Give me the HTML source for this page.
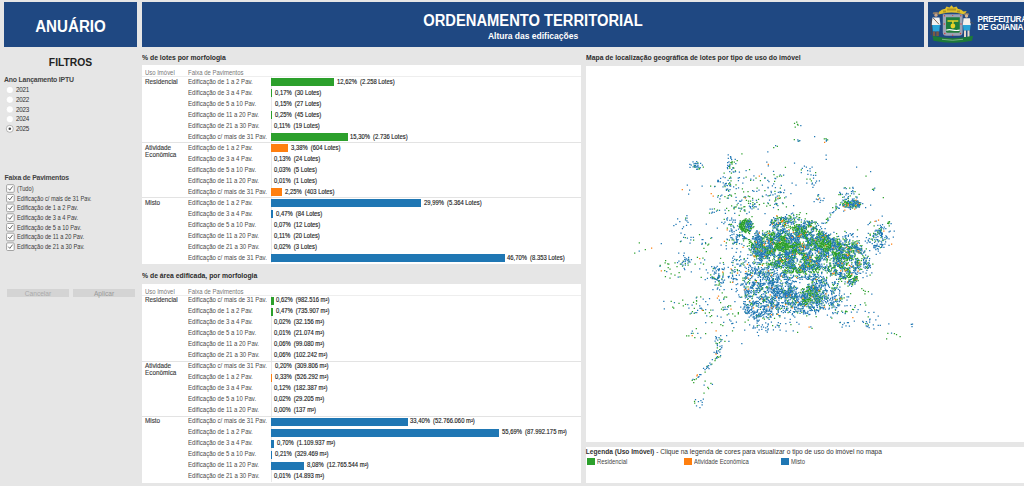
<!DOCTYPE html><html><head><meta charset="utf-8"><style>
*{margin:0;padding:0;box-sizing:border-box}
html,body{width:1024px;height:486px;overflow:hidden;background:#e6e6e6;font-family:"Liberation Sans",sans-serif;position:relative}
.a{position:absolute;white-space:nowrap}
.hdr{position:absolute;background:#1f4882;top:2px;height:45px}
.tbl{position:absolute;left:142px;width:439px;height:199px;background:#fff}
.th{position:absolute;font-size:6.4px;color:#777;white-space:nowrap;line-height:8px;transform:scaleX(0.93);transform-origin:0 0}
.hl{position:absolute;left:142px;width:439px;height:1px;background:#eee}
.gl{position:absolute;left:142px;width:439px;height:1px;background:#e3e3e3}
.vl{position:absolute;left:271px;width:1px;background:#e8e8e8}
.grp{position:absolute;font-size:6.6px;color:#3a3a3a;-webkit-text-stroke:0.12px #3a3a3a;line-height:7.2px;white-space:nowrap;transform:scaleX(0.96);transform-origin:0 0}
.lab{position:absolute;font-size:6.5px;color:#4a4a4a;white-space:nowrap;line-height:8px;transform:scaleX(0.93);transform-origin:0 0}
.val{position:absolute;font-size:6.9px;color:#222;-webkit-text-stroke:0.15px #222;white-space:pre;line-height:8px;transform:scaleX(0.85);transform-origin:0 0}
.bar{position:absolute;height:8px}
.ttl{position:absolute;font-size:7px;font-weight:bold;color:#2b2b2b;white-space:nowrap;transform:scaleX(0.975);transform-origin:0 0}
.rad{position:absolute;left:6.5px;width:7px;height:7px;border-radius:50%;background:#fff;border:0.5px solid #ddd}
.rt{position:absolute;left:16px;font-size:6.3px;color:#333;letter-spacing:-0.25px;white-space:nowrap;line-height:8px}
.cb{position:absolute;left:6.5px;width:8px;height:7.5px;background:#fff;border:1px solid #aaa}
.ct{position:absolute;left:17px;font-size:6.7px;color:#3a3a3a;white-space:nowrap;line-height:8px;transform:scaleX(0.853);transform-origin:0 0}
.btn{position:absolute;top:289px;height:8px;background:#d4d4d4;font-size:6.6px;text-align:center;line-height:9.4px}
</style></head><body>
<div class="hdr" style="left:4px;width:133px"></div>
<div class="hdr" style="left:142px;width:782px"></div>
<div class="hdr" style="left:928px;width:96px"></div>
<div class="a" style="left:4px;width:133px;top:17.5px;text-align:center;color:#fff;font-weight:bold;font-size:15.6px;line-height:18px;transform:scaleX(0.97)">ANUÁRIO</div>
<div class="a" style="left:142px;width:782px;top:11.5px;text-align:center;color:#fff;font-weight:bold;font-size:16px;line-height:17px;transform:scaleX(0.92)">ORDENAMENTO TERRITORIAL</div>
<div class="a" style="left:142px;width:782px;top:30.7px;text-align:center;color:#fff;font-weight:bold;font-size:8.5px;line-height:10px">Altura das edificações</div>
<div class="a" style="left:977.5px;top:15.8px;color:#fff;font-weight:bold;font-size:8.2px;letter-spacing:-0.3px;line-height:7.8px">PREFEITURA<br>DE GOIÂNIA</div>
<svg class="a" style="left:926px;top:2px" width="50" height="45" viewBox="0 0 50 45">
<path d="M13.5 9.5 Q16 6.5 19 7 L20.5 4.5 L23.5 5.5 L25.5 3.2 L27.5 5.5 L30.5 4.5 L32 7 Q35 6.5 37.5 9.5 L40.7 9 L38.5 12.5 L35 11.8 Q25.5 9 16 11.8 L12.5 12.5 L13.4 9 Z" fill="#e2c12a"/>
<path d="M21 6.5 h9 v2 h-9z M17 8.5 h3 v2 h-3z M31 8.5 h3 v2 h-3z" fill="#7a6a20" opacity="0.5"/>
<path d="M16.8 12.3 h19.8 v18 q0 3.5 -3.5 3.5 h-12.8 q-3.5 0 -3.5 -3.5 z" fill="#9ca3b4"/>
<path d="M20 15.3 h13.8 v14 q0 1.5 -1.5 1.5 h-10.8 q-1.5 0 -1.5 -1.5 z" fill="#1f7d3c"/>
<path d="M21.5 18.2 h10.8 v1.5 h-4.6 v2 h-1.6 v-2 h-4.6z" fill="#e6d22a"/>
<circle cx="26.9" cy="24" r="2.4" fill="#e6d22a"/>
<path d="M20.3 27.5 q3 -0.8 6.6 0 q3.5 0.8 6.8 0 v1.2 q-3.3 0.8 -6.8 0 q-3.6 -0.8 -6.6 0z" fill="#ffffff"/>
<circle cx="18.5" cy="13.8" r="0.7" fill="#d23a3a"/><circle cx="26.7" cy="13.5" r="0.6" fill="#d23a3a"/><circle cx="34.8" cy="13.8" r="0.7" fill="#d23a3a"/>
<circle cx="18.3" cy="22" r="0.7" fill="#d23a3a"/><circle cx="35" cy="22" r="0.7" fill="#d23a3a"/>
<circle cx="18.8" cy="31.5" r="0.7" fill="#d23a3a"/><circle cx="34.5" cy="31.5" r="0.7" fill="#d23a3a"/><circle cx="26.7" cy="33.2" r="0.6" fill="#d23a3a"/>
<ellipse cx="10" cy="11.3" rx="3.3" ry="1.4" fill="#8a7a6a"/>
<circle cx="10" cy="13.2" r="1.6" fill="#c9a58a"/>
<path d="M6.5 15.5 h7 l1 7.5 h-9 z" fill="#f2f2f2"/>
<path d="M7 15.8 l6 6.5" stroke="#6b4a30" stroke-width="0.8"/>
<path d="M6.3 23 h7.6 l-0.6 6.5 h-6.4z" fill="#2aa5d8"/>
<path d="M6.8 29.5 h2.5 v4.5 h-2.5z M10.3 29.5 h2.5 v4.5 h-2.5z" fill="#7a5a44"/>
<path d="M5.2 17 v16" stroke="#5a4030" stroke-width="0.8"/>
<ellipse cx="40.5" cy="12.3" rx="2.6" ry="1.3" fill="#8a7a6a"/>
<circle cx="40.5" cy="14" r="1.7" fill="#d6b394"/>
<path d="M37.5 16.3 h6.5 l0.8 7 h-8z" fill="#f4f0ec"/>
<path d="M37 23 h7.5 l-0.5 5.5 h-6.5z" fill="#2aa5d8"/>
<path d="M38 28.5 h2 v6.5 h-2z M41.5 28.5 h2 v6.5 h-2z" fill="#e8d8c8"/>
<path d="M44 20 l3.5 1.5" stroke="#555" stroke-width="0.9"/>
<path d="M6.5 33.8 Q26.7 38.5 47 33.8 L46 38.8 Q26.7 42.5 7.5 38.8 Z" fill="#1d7a38"/>
<path d="M16 37.3 Q26.7 39.2 37 37.3" stroke="#b8d8b8" stroke-width="0.6" fill="none"/>
</svg>

<div class="a" style="left:4px;width:133px;top:57px;text-align:center;color:#222;font-weight:bold;font-size:10.3px;line-height:12px">FILTROS</div>
<div class="a" style="left:4px;top:75.5px;color:#444;font-weight:bold;font-size:6.9px;letter-spacing:-0.2px;line-height:8px">Ano Lançamento IPTU</div>
<div class="a" style="left:4.5px;top:173.8px;color:#444;font-weight:bold;font-size:6.9px;letter-spacing:-0.2px;line-height:8px">Faixa de Pavimentos</div>
<div class="rt" style="top:86.1px">2021</div>
<div class="rt" style="top:95.8px">2022</div>
<div class="rt" style="top:105.5px">2023</div>
<div class="rt" style="top:115.2px">2024</div>
<div class="rt" style="top:124.9px">2025</div>
<div class="ct" style="top:184.8px">(Tudo)</div>
<div class="ct" style="top:194.5px">Edificação c/ mais de 31 Pav.</div>
<div class="ct" style="top:204.2px">Edificação de 1 a 2 Pav.</div>
<div class="ct" style="top:213.9px">Edificação de 3 a 4 Pav.</div>
<div class="ct" style="top:223.6px">Edificação de 5 a 10 Pav.</div>
<div class="ct" style="top:233.3px">Edificação de 11 a 20 Pav.</div>
<div class="ct" style="top:243.0px">Edificação de 21 a 30 Pav.</div>
<svg class="a" style="left:0;top:0" width="140" height="300" viewBox="0 0 140 300"><circle cx="9.8" cy="90.00" r="3.6" fill="#fff" stroke="#d6d6d6" stroke-width="0.5"/><circle cx="9.8" cy="99.70" r="3.6" fill="#fff" stroke="#d6d6d6" stroke-width="0.5"/><circle cx="9.8" cy="109.40" r="3.6" fill="#fff" stroke="#d6d6d6" stroke-width="0.5"/><circle cx="9.8" cy="119.10" r="3.6" fill="#fff" stroke="#d6d6d6" stroke-width="0.5"/><circle cx="9.8" cy="128.80" r="3.5" fill="#fff" stroke="#999" stroke-width="0.7"/><circle cx="9.8" cy="128.80" r="1.3" fill="#444"/><rect x="6.6" y="184.70" width="7.6" height="7.6" rx="1" fill="#fff" stroke="#9a9a9a" stroke-width="0.9"/><path d="M8.3 188.50 L9.8 190.20 L12.6 186.40" fill="none" stroke="#555" stroke-width="0.9"/><rect x="6.6" y="194.40" width="7.6" height="7.6" rx="1" fill="#fff" stroke="#9a9a9a" stroke-width="0.9"/><path d="M8.3 198.20 L9.8 199.90 L12.6 196.10" fill="none" stroke="#555" stroke-width="0.9"/><rect x="6.6" y="204.10" width="7.6" height="7.6" rx="1" fill="#fff" stroke="#9a9a9a" stroke-width="0.9"/><path d="M8.3 207.90 L9.8 209.60 L12.6 205.80" fill="none" stroke="#555" stroke-width="0.9"/><rect x="6.6" y="213.80" width="7.6" height="7.6" rx="1" fill="#fff" stroke="#9a9a9a" stroke-width="0.9"/><path d="M8.3 217.60 L9.8 219.30 L12.6 215.50" fill="none" stroke="#555" stroke-width="0.9"/><rect x="6.6" y="223.50" width="7.6" height="7.6" rx="1" fill="#fff" stroke="#9a9a9a" stroke-width="0.9"/><path d="M8.3 227.30 L9.8 229.00 L12.6 225.20" fill="none" stroke="#555" stroke-width="0.9"/><rect x="6.6" y="233.20" width="7.6" height="7.6" rx="1" fill="#fff" stroke="#9a9a9a" stroke-width="0.9"/><path d="M8.3 237.00 L9.8 238.70 L12.6 234.90" fill="none" stroke="#555" stroke-width="0.9"/><rect x="6.6" y="242.90" width="7.6" height="7.6" rx="1" fill="#fff" stroke="#9a9a9a" stroke-width="0.9"/><path d="M8.3 246.70 L9.8 248.40 L12.6 244.60" fill="none" stroke="#555" stroke-width="0.9"/></svg>
<div class="btn" style="left:7px;width:62px;color:#aaa">Cancelar</div>
<div class="btn" style="left:73px;width:62px;color:#999">Aplicar</div>
<div class="ttl" style="left:142px;top:54px">% de lotes por morfologia</div>
<div class="tbl" style="top:65px"></div>
<div class="th" style="left:145px;top:69px">Uso Imóvel</div>
<div class="th" style="left:188px;top:69px">Faixa de Pavimentos</div>
<div class="hl" style="top:76px"></div>
<div class="vl" style="top:76px;height:187px"></div>
<div class="grp" style="left:145px;top:77.5px">Residencial</div>
<div class="lab" style="left:188px;top:77.5px">Edificação de 1 a 2 Pav.</div>
<div class="bar" style="left:271px;top:78px;width:63.10px;background:#2ca02c"></div>
<div class="val" style="left:336.90px;top:77.5px">12,62%  (2.258 Lotes)</div>
<div class="lab" style="left:188px;top:88.5px">Edificação de 3 a 4 Pav.</div>
<div class="bar" style="left:271px;top:89px;width:0.85px;background:#2ca02c"></div>
<div class="val" style="left:274.65px;top:88.5px">0,17%  (30 Lotes)</div>
<div class="lab" style="left:188px;top:99.5px">Edificação de 5 a 10 Pav.</div>
<div class="val" style="left:274.55px;top:99.5px">0,15%  (27 Lotes)</div>
<div class="lab" style="left:188px;top:110.5px">Edificação de 11 a 20 Pav.</div>
<div class="bar" style="left:271px;top:111px;width:1.25px;background:#2ca02c"></div>
<div class="val" style="left:275.05px;top:110.5px">0,25%  (45 Lotes)</div>
<div class="lab" style="left:188px;top:121.5px">Edificação de 21 a 30 Pav.</div>
<div class="val" style="left:274.35px;top:121.5px">0,11%  (19 Lotes)</div>
<div class="lab" style="left:188px;top:132.5px">Edificação c/ mais de 31 Pav.</div>
<div class="bar" style="left:271px;top:133px;width:76.50px;background:#2ca02c"></div>
<div class="val" style="left:350.30px;top:132.5px">15,30%  (2.736 Lotes)</div>
<div class="gl" style="top:142px"></div>
<div class="grp" style="left:145px;top:143.5px">Atividade<br>Econômica</div>
<div class="lab" style="left:188px;top:143.5px">Edificação de 1 a 2 Pav.</div>
<div class="bar" style="left:271px;top:144px;width:16.90px;background:#ff7f0e"></div>
<div class="val" style="left:290.70px;top:143.5px">3,38%  (604 Lotes)</div>
<div class="lab" style="left:188px;top:154.5px">Edificação de 3 a 4 Pav.</div>
<div class="val" style="left:274.45px;top:154.5px">0,13%  (24 Lotes)</div>
<div class="lab" style="left:188px;top:165.5px">Edificação de 5 a 10 Pav.</div>
<div class="val" style="left:273.95px;top:165.5px">0,03%  (5 Lotes)</div>
<div class="lab" style="left:188px;top:176.5px">Edificação de 11 a 20 Pav.</div>
<div class="val" style="left:273.85px;top:176.5px">0,01%  (1 Lotes)</div>
<div class="lab" style="left:188px;top:187.5px">Edificação c/ mais de 31 Pav.</div>
<div class="bar" style="left:271px;top:188px;width:11.25px;background:#ff7f0e"></div>
<div class="val" style="left:285.05px;top:187.5px">2,25%  (403 Lotes)</div>
<div class="gl" style="top:197px"></div>
<div class="grp" style="left:145px;top:198.5px">Misto</div>
<div class="lab" style="left:188px;top:198.5px">Edificação de 1 a 2 Pav.</div>
<div class="bar" style="left:271px;top:199px;width:149.95px;background:#1f77b4"></div>
<div class="val" style="left:423.75px;top:198.5px">29,99%  (5.364 Lotes)</div>
<div class="lab" style="left:188px;top:209.5px">Edificação de 3 a 4 Pav.</div>
<div class="bar" style="left:271px;top:210px;width:2.35px;background:#1f77b4"></div>
<div class="val" style="left:276.15px;top:209.5px">0,47%  (84 Lotes)</div>
<div class="lab" style="left:188px;top:220.5px">Edificação de 5 a 10 Pav.</div>
<div class="val" style="left:274.15px;top:220.5px">0,07%  (12 Lotes)</div>
<div class="lab" style="left:188px;top:231.5px">Edificação de 11 a 20 Pav.</div>
<div class="val" style="left:274.35px;top:231.5px">0,11%  (20 Lotes)</div>
<div class="lab" style="left:188px;top:242.5px">Edificação de 21 a 30 Pav.</div>
<div class="val" style="left:273.90px;top:242.5px">0,02%  (3 Lotes)</div>
<div class="lab" style="left:188px;top:253.5px">Edificação c/ mais de 31 Pav.</div>
<div class="bar" style="left:271px;top:254px;width:233.50px;background:#1f77b4"></div>
<div class="val" style="left:507.30px;top:253.5px">46,70%  (8.353 Lotes)</div>
<div class="ttl" style="left:142px;top:271.5px">% de área edificada, por morfologia</div>
<div class="tbl" style="top:283.5px"></div>
<div class="th" style="left:145px;top:287.5px">Uso Imóvel</div>
<div class="th" style="left:188px;top:287.5px">Faixa de Pavimentos</div>
<div class="hl" style="top:294.5px"></div>
<div class="vl" style="top:294.5px;height:187px"></div>
<div class="grp" style="left:145px;top:296.0px">Residencial</div>
<div class="lab" style="left:188px;top:296.0px">Edificação c/ mais de 31 Pav.</div>
<div class="bar" style="left:271px;top:296.5px;width:2.54px;background:#2ca02c"></div>
<div class="val" style="left:276.34px;top:296.0px">0,62%  (982.516 m²)</div>
<div class="lab" style="left:188px;top:307.0px">Edificação de 1 a 2 Pav.</div>
<div class="bar" style="left:271px;top:307.5px;width:1.92px;background:#2ca02c"></div>
<div class="val" style="left:275.72px;top:307.0px">0,47%  (735.907 m²)</div>
<div class="lab" style="left:188px;top:318.0px">Edificação de 3 a 4 Pav.</div>
<div class="val" style="left:273.88px;top:318.0px">0,02%  (32.156 m²)</div>
<div class="lab" style="left:188px;top:329.0px">Edificação de 5 a 10 Pav.</div>
<div class="val" style="left:273.84px;top:329.0px">0,01%  (21.074 m²)</div>
<div class="lab" style="left:188px;top:340.0px">Edificação de 11 a 20 Pav.</div>
<div class="val" style="left:274.05px;top:340.0px">0,06%  (99.080 m²)</div>
<div class="lab" style="left:188px;top:351.0px">Edificação de 21 a 30 Pav.</div>
<div class="val" style="left:274.05px;top:351.0px">0,06%  (102.242 m²)</div>
<div class="gl" style="top:360.5px"></div>
<div class="grp" style="left:145px;top:362.0px">Atividade<br>Econômica</div>
<div class="lab" style="left:188px;top:362.0px">Edificação c/ mais de 31 Pav.</div>
<div class="val" style="left:274.62px;top:362.0px">0,20%  (309.806 m²)</div>
<div class="lab" style="left:188px;top:373.0px">Edificação de 1 a 2 Pav.</div>
<div class="bar" style="left:271px;top:373.5px;width:1.35px;background:#ff7f0e"></div>
<div class="val" style="left:275.15px;top:373.0px">0,33%  (526.292 m²)</div>
<div class="lab" style="left:188px;top:384.0px">Edificação de 3 a 4 Pav.</div>
<div class="val" style="left:274.29px;top:384.0px">0,12%  (182.387 m²)</div>
<div class="lab" style="left:188px;top:395.0px">Edificação de 5 a 10 Pav.</div>
<div class="val" style="left:273.88px;top:395.0px">0,02%  (29.205 m²)</div>
<div class="lab" style="left:188px;top:406.0px">Edificação de 11 a 20 Pav.</div>
<div class="val" style="left:273.80px;top:406.0px">0,00%  (137 m²)</div>
<div class="gl" style="top:415.5px"></div>
<div class="grp" style="left:145px;top:417.0px">Misto</div>
<div class="lab" style="left:188px;top:417.0px">Edificação c/ mais de 31 Pav.</div>
<div class="bar" style="left:271px;top:417.5px;width:136.61px;background:#1f77b4"></div>
<div class="val" style="left:410.41px;top:417.0px">33,40%  (52.766.060 m²)</div>
<div class="lab" style="left:188px;top:428.0px">Edificação de 1 a 2 Pav.</div>
<div class="bar" style="left:271px;top:428.5px;width:227.77px;background:#1f77b4"></div>
<div class="val" style="left:501.57px;top:428.0px">55,69%  (87.992.175 m²)</div>
<div class="lab" style="left:188px;top:439.0px">Edificação de 3 a 4 Pav.</div>
<div class="bar" style="left:271px;top:439.5px;width:2.86px;background:#1f77b4"></div>
<div class="val" style="left:276.66px;top:439.0px">0,70%  (1.109.937 m²)</div>
<div class="lab" style="left:188px;top:450.0px">Edificação de 5 a 10 Pav.</div>
<div class="bar" style="left:271px;top:450.5px;width:0.86px;background:#1f77b4"></div>
<div class="val" style="left:274.66px;top:450.0px">0,21%  (329.469 m²)</div>
<div class="lab" style="left:188px;top:461.0px">Edificação de 11 a 20 Pav.</div>
<div class="bar" style="left:271px;top:461.5px;width:33.05px;background:#1f77b4"></div>
<div class="val" style="left:306.85px;top:461.0px">8,08%  (12.765.544 m²)</div>
<div class="lab" style="left:188px;top:472.0px">Edificação de 21 a 30 Pav.</div>
<div class="val" style="left:273.84px;top:472.0px">0,01%  (14.893 m²)</div>
<div class="ttl" style="left:586px;top:54px">Mapa de localização geográfica de lotes por tipo de uso do imóvel</div>
<div class="a" style="left:586px;top:66px;width:438px;height:376px;background:#fff"></div>
<svg class="a" style="left:586px;top:65px" width="438" height="377" viewBox="0 0 438 377"><path stroke="#2ca02c" stroke-width="1.25" d="M210.1 57.2h1.25M207.9 58.3h1.25M210.9 59.4h1.25M211.4 60.2h1.25M208.6 62.0h1.25M237.7 73.8h1.25M239.4 73.7h1.25M207.7 74.6h1.25M241.0 74.8h1.25M212.5 75.8h1.25M190.7 81.3h1.25M187.1 82.7h1.25M155.3 88.8h1.25M150.6 95.5h1.25M145.5 96.5h1.25M147.7 97.1h1.25M111.2 97.8h1.25M144.2 97.7h1.25M145.4 97.6h1.25M145.4 99.1h1.25M107.7 100.5h1.25M143.0 101.5h1.25M107.9 102.1h1.25M116.7 102.2h1.25M146.5 102.7h1.25M198.8 102.3h1.25M112.6 103.4h1.25M112.9 103.7h1.25M143.2 103.0h1.25M147.2 103.1h1.25M112.4 104.2h1.25M162.9 104.7h1.25M214.7 104.8h1.25M148.8 105.8h1.25M137.5 108.0h1.25M144.8 108.0h1.25M229.0 107.5h1.25M187.4 109.7h1.25M192.9 111.1h1.25M194.9 111.2h1.25M143.9 112.2h1.25M159.5 112.1h1.25M178.3 112.5h1.25M190.5 111.8h1.25M142.9 113.4h1.25M169.4 113.0h1.25M220.3 114.1h1.25M223.5 114.2h1.25M144.4 115.9h1.25M164.0 115.3h1.25M173.8 115.6h1.25M224.8 115.8h1.25M188.0 116.4h1.25M142.0 118.9h1.25M143.4 118.9h1.25M143.9 119.8h1.25M149.4 119.8h1.25M128.3 121.3h1.25M138.4 121.7h1.25M258.5 122.5h1.25M170.5 123.0h1.25M193.7 123.2h1.25M263.1 123.0h1.25M155.8 123.9h1.25M285.9 124.4h1.25M287.1 124.0h1.25M141.8 125.4h1.25M178.3 125.6h1.25M157.0 126.8h1.25M161.4 126.6h1.25M188.3 126.3h1.25M268.4 126.7h1.25M148.5 128.7h1.25M144.3 130.1h1.25M252.3 129.7h1.25M253.9 129.7h1.25M272.5 129.4h1.25M131.7 130.6h1.25M141.7 130.6h1.25M144.9 131.1h1.25M161.7 131.2h1.25M182.6 130.7h1.25M192.5 130.9h1.25M231.4 131.0h1.25M263.6 130.9h1.25M138.3 131.7h1.25M157.4 132.4h1.25M163.1 131.7h1.25M176.2 131.7h1.25M256.2 132.3h1.25M269.3 131.8h1.25M140.7 133.2h1.25M166.0 133.3h1.25M192.9 133.3h1.25M193.7 132.9h1.25M198.0 132.9h1.25M261.7 133.4h1.25M171.9 134.3h1.25M189.0 133.9h1.25M159.8 135.3h1.25M189.3 135.1h1.25M257.1 135.6h1.25M261.8 135.3h1.25M267.1 135.6h1.25M268.5 135.6h1.25M161.9 136.0h1.25M163.9 136.1h1.25M188.2 136.1h1.25M258.6 136.0h1.25M259.3 136.8h1.25M133.1 137.4h1.25M166.3 137.5h1.25M170.3 137.4h1.25M254.2 137.8h1.25M257.8 137.1h1.25M258.3 137.4h1.25M259.9 137.8h1.25M260.6 137.6h1.25M261.4 137.8h1.25M264.0 137.3h1.25M265.4 137.8h1.25M269.3 137.6h1.25M270.9 137.1h1.25M273.1 137.7h1.25M161.9 138.4h1.25M177.2 138.4h1.25M181.8 138.7h1.25M196.5 138.7h1.25M249.5 138.8h1.25M256.1 138.8h1.25M257.2 138.6h1.25M259.6 138.8h1.25M261.0 138.6h1.25M261.8 138.7h1.25M265.1 139.0h1.25M268.6 138.8h1.25M150.5 139.9h1.25M166.3 139.5h1.25M172.8 139.7h1.25M190.0 139.5h1.25M256.1 140.1h1.25M260.4 139.6h1.25M268.5 139.3h1.25M272.6 139.6h1.25M273.9 139.4h1.25M145.0 140.8h1.25M180.1 141.0h1.25M183.5 140.4h1.25M258.2 141.1h1.25M259.8 140.8h1.25M260.6 140.6h1.25M263.7 141.0h1.25M265.3 140.9h1.25M268.2 140.6h1.25M148.3 142.0h1.25M149.5 141.8h1.25M157.2 141.8h1.25M158.2 141.6h1.25M199.8 141.8h1.25M249.4 141.8h1.25M259.4 142.0h1.25M263.9 141.8h1.25M266.5 141.5h1.25M268.8 141.6h1.25M269.3 142.0h1.25M270.2 141.9h1.25M140.0 143.4h1.25M147.3 143.3h1.25M153.3 143.3h1.25M155.2 143.0h1.25M167.2 142.8h1.25M246.1 142.7h1.25M249.4 143.2h1.25M266.0 143.2h1.25M127.8 143.8h1.25M147.5 143.9h1.25M191.7 144.5h1.25M249.9 143.8h1.25M130.9 145.2h1.25M142.1 145.6h1.25M158.1 144.9h1.25M153.8 146.1h1.25M158.3 146.1h1.25M213.5 147.5h1.25M122.9 148.1h1.25M219.9 148.7h1.25M206.9 149.8h1.25M210.2 149.5h1.25M212.6 149.5h1.25M244.1 149.8h1.25M152.6 150.4h1.25M202.4 150.6h1.25M203.5 151.1h1.25M165.4 151.6h1.25M190.5 151.5h1.25M194.8 152.2h1.25M204.3 151.9h1.25M210.2 151.6h1.25M99.0 153.0h1.25M191.4 153.0h1.25M192.8 152.6h1.25M194.0 153.1h1.25M201.1 153.1h1.25M203.5 153.2h1.25M204.4 153.0h1.25M206.8 153.1h1.25M212.5 152.6h1.25M213.1 152.5h1.25M241.2 153.2h1.25M137.6 154.3h1.25M158.7 154.2h1.25M159.6 153.9h1.25M162.7 153.9h1.25M190.3 153.7h1.25M194.0 154.1h1.25M197.1 153.9h1.25M199.0 154.3h1.25M202.3 154.2h1.25M211.2 154.3h1.25M218.6 153.9h1.25M239.8 154.4h1.25M241.1 154.1h1.25M156.5 155.5h1.25M157.4 155.1h1.25M158.4 155.0h1.25M159.6 155.5h1.25M161.0 155.0h1.25M163.6 155.1h1.25M185.7 155.0h1.25M189.1 155.3h1.25M193.8 155.3h1.25M196.8 155.1h1.25M197.7 155.3h1.25M204.4 155.3h1.25M207.8 154.7h1.25M225.2 155.5h1.25M153.6 155.9h1.25M155.5 156.3h1.25M155.8 156.1h1.25M157.1 155.9h1.25M158.3 156.2h1.25M159.8 156.6h1.25M160.6 156.5h1.25M161.5 156.4h1.25M162.7 156.1h1.25M164.6 156.5h1.25M187.9 155.9h1.25M189.1 156.2h1.25M199.2 156.6h1.25M200.3 156.1h1.25M201.4 156.3h1.25M204.2 155.9h1.25M208.2 156.1h1.25M222.9 156.4h1.25M302.9 156.5h1.25M155.1 157.6h1.25M156.1 157.3h1.25M157.0 157.6h1.25M158.0 157.2h1.25M159.6 157.6h1.25M161.4 157.5h1.25M162.9 157.1h1.25M184.8 157.7h1.25M186.1 157.1h1.25M187.2 157.4h1.25M193.6 157.3h1.25M194.9 157.0h1.25M197.2 156.9h1.25M198.1 157.3h1.25M214.7 157.1h1.25M218.7 157.1h1.25M221.1 157.1h1.25M227.9 157.1h1.25M229.7 157.3h1.25M240.0 157.7h1.25M283.9 157.2h1.25M301.8 157.0h1.25M302.6 157.0h1.25M153.6 158.5h1.25M154.7 158.5h1.25M156.3 158.7h1.25M157.3 158.1h1.25M158.1 158.4h1.25M160.5 158.4h1.25M166.4 158.7h1.25M198.4 158.7h1.25M207.6 158.1h1.25M221.9 158.2h1.25M224.6 158.4h1.25M225.7 158.2h1.25M228.7 158.8h1.25M301.0 158.4h1.25M302.2 158.7h1.25M143.0 159.4h1.25M143.9 159.9h1.25M144.9 159.4h1.25M152.7 159.2h1.25M154.0 159.5h1.25M155.3 159.5h1.25M155.9 159.3h1.25M157.1 159.7h1.25M158.4 159.2h1.25M162.0 159.5h1.25M163.2 159.9h1.25M164.1 159.4h1.25M165.9 159.1h1.25M187.9 159.1h1.25M192.5 159.5h1.25M196.1 159.8h1.25M198.0 159.9h1.25M198.8 159.7h1.25M210.0 159.5h1.25M211.5 159.5h1.25M213.0 159.5h1.25M221.2 159.9h1.25M224.2 159.8h1.25M153.2 160.4h1.25M154.3 160.2h1.25M155.0 160.8h1.25M156.5 160.9h1.25M157.0 160.7h1.25M158.8 160.9h1.25M161.0 160.7h1.25M165.0 160.5h1.25M190.4 161.0h1.25M191.7 160.9h1.25M197.1 160.5h1.25M201.5 160.4h1.25M208.0 160.4h1.25M209.8 160.2h1.25M212.2 160.5h1.25M213.4 161.0h1.25M221.5 160.6h1.25M222.4 160.2h1.25M223.3 160.4h1.25M224.6 160.5h1.25M287.5 160.9h1.25M302.6 160.8h1.25M147.0 161.9h1.25M152.5 161.7h1.25M153.7 161.6h1.25M154.8 162.1h1.25M156.2 161.8h1.25M157.7 161.4h1.25M158.2 162.0h1.25M167.2 161.6h1.25M197.8 161.8h1.25M202.3 162.1h1.25M203.8 161.3h1.25M206.0 162.0h1.25M208.0 161.9h1.25M209.2 161.8h1.25M210.3 161.7h1.25M216.9 161.6h1.25M219.9 161.9h1.25M222.0 161.9h1.25M223.6 161.6h1.25M226.5 161.8h1.25M229.7 161.4h1.25M140.7 163.1h1.25M153.1 162.9h1.25M154.4 162.6h1.25M155.2 162.5h1.25M156.1 162.8h1.25M157.6 163.1h1.25M158.1 162.7h1.25M160.4 162.7h1.25M164.0 162.5h1.25M164.9 163.2h1.25M166.4 162.5h1.25M186.6 163.0h1.25M189.1 162.8h1.25M200.2 162.7h1.25M204.4 162.6h1.25M206.4 162.6h1.25M207.7 162.5h1.25M209.0 162.8h1.25M210.4 163.0h1.25M211.3 163.0h1.25M212.2 162.7h1.25M214.7 163.1h1.25M215.2 162.6h1.25M216.9 162.9h1.25M220.0 162.7h1.25M226.9 162.5h1.25M228.1 162.8h1.25M154.0 164.2h1.25M154.9 163.9h1.25M156.1 164.0h1.25M156.9 163.7h1.25M158.2 163.6h1.25M159.4 164.3h1.25M160.3 164.0h1.25M163.6 163.7h1.25M164.7 163.9h1.25M191.1 164.0h1.25M203.9 163.7h1.25M206.0 164.0h1.25M207.6 163.7h1.25M210.2 164.0h1.25M211.4 163.9h1.25M212.3 163.8h1.25M214.4 163.8h1.25M215.7 164.2h1.25M217.9 163.7h1.25M219.6 163.7h1.25M225.7 164.1h1.25M226.9 163.6h1.25M228.7 163.6h1.25M292.7 163.6h1.25M294.8 163.8h1.25M155.0 165.2h1.25M156.4 165.3h1.25M157.1 164.8h1.25M158.6 165.2h1.25M159.2 164.9h1.25M160.8 164.7h1.25M161.9 165.3h1.25M191.1 165.2h1.25M193.7 164.8h1.25M206.4 164.9h1.25M208.3 165.1h1.25M209.2 164.8h1.25M211.1 164.9h1.25M212.2 165.2h1.25M214.9 164.8h1.25M215.3 164.6h1.25M216.4 165.2h1.25M217.9 165.4h1.25M219.7 164.6h1.25M226.9 164.9h1.25M230.0 164.6h1.25M230.6 164.7h1.25M270.9 164.9h1.25M294.4 165.0h1.25M156.0 166.1h1.25M157.5 166.0h1.25M158.4 166.0h1.25M159.4 166.5h1.25M160.5 165.8h1.25M161.4 165.8h1.25M162.9 166.3h1.25M163.7 166.0h1.25M176.0 165.8h1.25M180.7 166.3h1.25M182.7 165.9h1.25M196.7 166.2h1.25M206.7 165.8h1.25M209.2 166.0h1.25M210.3 166.3h1.25M210.9 165.8h1.25M213.3 166.0h1.25M214.9 166.2h1.25M215.8 166.2h1.25M218.2 166.0h1.25M218.8 166.0h1.25M221.2 166.0h1.25M229.7 166.0h1.25M232.3 166.4h1.25M233.1 165.8h1.25M235.5 166.4h1.25M258.3 166.3h1.25M291.3 166.3h1.25M294.6 165.8h1.25M153.2 167.3h1.25M158.1 166.9h1.25M159.2 167.6h1.25M162.0 167.6h1.25M182.9 166.9h1.25M186.8 167.2h1.25M192.1 167.2h1.25M193.9 166.9h1.25M196.8 167.2h1.25M199.9 166.9h1.25M209.4 167.5h1.25M212.6 167.0h1.25M214.8 167.2h1.25M215.5 167.0h1.25M216.9 167.4h1.25M217.8 167.2h1.25M218.9 167.3h1.25M219.9 167.3h1.25M220.7 167.1h1.25M223.7 167.5h1.25M224.3 167.1h1.25M232.0 166.9h1.25M232.8 167.4h1.25M234.5 167.4h1.25M291.2 167.6h1.25M162.9 168.6h1.25M169.2 168.0h1.25M178.1 168.1h1.25M181.3 168.1h1.25M185.1 168.2h1.25M185.9 167.9h1.25M187.2 168.3h1.25M188.0 168.5h1.25M195.0 168.6h1.25M199.0 168.7h1.25M201.3 168.5h1.25M202.7 167.9h1.25M209.0 167.9h1.25M211.5 168.0h1.25M212.1 168.4h1.25M213.3 168.2h1.25M215.9 168.6h1.25M216.5 168.1h1.25M217.9 168.4h1.25M222.5 167.9h1.25M231.4 168.5h1.25M232.3 168.5h1.25M234.2 168.4h1.25M235.8 168.1h1.25M250.0 168.6h1.25M287.0 168.4h1.25M292.7 168.3h1.25M112.9 169.7h1.25M179.3 169.7h1.25M180.0 169.3h1.25M183.0 169.3h1.25M183.9 169.1h1.25M184.7 169.1h1.25M185.8 169.6h1.25M187.4 169.2h1.25M187.9 169.0h1.25M191.1 169.3h1.25M207.7 169.2h1.25M212.0 169.5h1.25M213.1 169.8h1.25M217.0 169.4h1.25M217.4 169.6h1.25M218.9 169.7h1.25M222.1 169.4h1.25M224.6 169.3h1.25M230.3 169.5h1.25M232.2 169.8h1.25M233.0 169.2h1.25M233.9 169.4h1.25M235.3 169.8h1.25M236.8 169.4h1.25M238.3 169.6h1.25M283.5 169.2h1.25M288.5 169.3h1.25M290.5 169.5h1.25M152.7 170.5h1.25M154.2 170.4h1.25M171.4 170.1h1.25M176.0 170.2h1.25M176.8 170.2h1.25M179.0 170.3h1.25M182.7 170.7h1.25M185.0 170.3h1.25M185.5 170.7h1.25M187.4 170.3h1.25M189.5 170.8h1.25M191.8 170.5h1.25M194.9 170.8h1.25M198.0 170.1h1.25M199.2 170.4h1.25M201.3 170.2h1.25M202.1 170.4h1.25M209.1 170.1h1.25M211.3 170.3h1.25M215.3 170.1h1.25M218.0 170.3h1.25M218.7 170.7h1.25M224.2 170.6h1.25M231.8 170.7h1.25M243.1 170.3h1.25M283.6 170.3h1.25M166.2 171.5h1.25M174.8 172.0h1.25M177.9 171.6h1.25M179.0 171.9h1.25M180.6 171.3h1.25M187.0 171.7h1.25M187.8 171.5h1.25M193.9 171.2h1.25M194.7 171.4h1.25M195.6 171.6h1.25M197.0 171.4h1.25M198.0 171.8h1.25M198.9 172.0h1.25M209.4 171.8h1.25M210.5 171.2h1.25M214.1 171.5h1.25M217.6 171.5h1.25M218.6 171.9h1.25M225.3 171.7h1.25M233.2 171.3h1.25M235.5 171.3h1.25M236.2 171.6h1.25M237.4 171.8h1.25M239.9 171.6h1.25M241.8 171.8h1.25M250.5 171.6h1.25M98.7 172.5h1.25M159.4 173.0h1.25M174.8 172.6h1.25M177.3 172.9h1.25M179.7 172.7h1.25M181.4 172.7h1.25M183.6 172.3h1.25M184.8 173.1h1.25M186.2 173.1h1.25M190.0 172.7h1.25M192.3 172.8h1.25M193.4 172.3h1.25M194.8 172.9h1.25M196.1 172.9h1.25M197.2 172.4h1.25M198.0 172.8h1.25M213.3 172.6h1.25M215.5 172.9h1.25M218.8 172.8h1.25M219.9 172.6h1.25M220.7 172.9h1.25M229.2 172.7h1.25M232.5 172.4h1.25M234.4 172.4h1.25M235.1 172.5h1.25M237.6 172.9h1.25M238.4 172.9h1.25M239.5 172.7h1.25M243.0 173.0h1.25M247.4 172.7h1.25M287.2 172.7h1.25M294.4 172.5h1.25M124.2 173.4h1.25M157.2 173.9h1.25M158.4 173.7h1.25M175.9 173.5h1.25M177.3 173.8h1.25M181.2 174.2h1.25M182.6 173.8h1.25M183.5 173.5h1.25M184.4 173.9h1.25M185.7 174.2h1.25M187.0 174.1h1.25M191.6 173.9h1.25M193.7 173.9h1.25M194.6 174.0h1.25M195.4 173.7h1.25M197.0 173.6h1.25M198.3 174.1h1.25M202.6 173.6h1.25M209.1 174.2h1.25M219.1 173.5h1.25M220.0 173.6h1.25M221.0 174.0h1.25M224.1 173.6h1.25M225.3 174.1h1.25M226.2 173.8h1.25M229.9 173.6h1.25M230.7 173.8h1.25M232.2 173.9h1.25M236.9 174.0h1.25M237.4 173.9h1.25M238.4 173.5h1.25M240.9 173.7h1.25M247.4 173.9h1.25M251.2 174.1h1.25M252.7 174.0h1.25M256.5 173.9h1.25M259.3 173.5h1.25M284.5 174.0h1.25M107.0 175.0h1.25M142.8 175.1h1.25M145.5 174.9h1.25M147.2 175.0h1.25M161.8 174.6h1.25M162.9 174.7h1.25M175.6 174.8h1.25M180.2 174.6h1.25M183.7 175.1h1.25M185.0 175.1h1.25M186.1 174.8h1.25M194.5 174.7h1.25M195.6 175.1h1.25M196.5 174.7h1.25M197.9 175.0h1.25M199.9 175.0h1.25M206.1 174.6h1.25M221.3 175.3h1.25M223.5 174.7h1.25M225.4 174.6h1.25M226.7 175.2h1.25M227.7 175.3h1.25M231.7 174.6h1.25M233.6 174.6h1.25M235.5 174.5h1.25M236.6 175.1h1.25M237.3 174.8h1.25M238.6 174.6h1.25M239.9 175.3h1.25M241.2 174.6h1.25M241.9 175.2h1.25M243.9 174.9h1.25M249.4 175.0h1.25M250.8 174.6h1.25M257.7 174.8h1.25M259.4 175.1h1.25M285.9 175.1h1.25M298.4 174.6h1.25M156.9 175.9h1.25M164.2 175.8h1.25M168.0 176.3h1.25M169.4 175.8h1.25M173.9 175.8h1.25M176.4 176.3h1.25M177.5 176.1h1.25M184.0 176.3h1.25M185.1 175.7h1.25M185.8 175.6h1.25M189.2 175.6h1.25M190.5 175.8h1.25M191.3 176.1h1.25M193.5 176.4h1.25M194.9 175.7h1.25M195.8 175.7h1.25M197.2 175.7h1.25M198.4 175.9h1.25M199.3 176.1h1.25M201.7 175.7h1.25M202.6 175.8h1.25M211.5 175.8h1.25M220.8 175.9h1.25M221.9 176.3h1.25M225.4 175.7h1.25M226.8 176.1h1.25M229.8 175.9h1.25M230.8 176.2h1.25M232.1 176.2h1.25M233.4 175.9h1.25M234.0 175.9h1.25M235.5 176.0h1.25M236.5 176.3h1.25M237.4 176.1h1.25M240.1 176.2h1.25M241.2 176.3h1.25M243.2 176.1h1.25M243.9 175.9h1.25M246.7 175.6h1.25M248.6 176.2h1.25M250.7 176.2h1.25M266.3 175.9h1.25M270.4 175.8h1.25M272.5 175.7h1.25M288.9 176.0h1.25M292.6 175.8h1.25M296.2 175.7h1.25M93.8 176.7h1.25M162.9 176.7h1.25M164.2 177.3h1.25M168.6 177.3h1.25M175.0 177.4h1.25M185.0 177.4h1.25M186.2 177.3h1.25M187.8 177.4h1.25M189.5 177.5h1.25M191.4 177.0h1.25M194.9 177.5h1.25M195.9 177.0h1.25M197.2 177.1h1.25M197.6 176.8h1.25M199.4 176.7h1.25M203.2 177.1h1.25M208.0 176.9h1.25M208.8 177.5h1.25M211.1 177.3h1.25M213.5 177.2h1.25M216.8 177.0h1.25M221.3 176.9h1.25M222.0 177.5h1.25M224.7 177.1h1.25M225.4 176.8h1.25M227.7 176.8h1.25M228.9 177.1h1.25M229.9 177.0h1.25M232.2 176.7h1.25M233.0 177.2h1.25M234.5 177.5h1.25M235.5 177.1h1.25M236.7 176.9h1.25M238.7 177.5h1.25M239.8 177.0h1.25M242.0 177.0h1.25M243.1 176.9h1.25M244.0 176.8h1.25M246.5 177.1h1.25M249.7 177.2h1.25M251.1 177.4h1.25M252.2 177.2h1.25M259.9 177.1h1.25M262.0 177.2h1.25M268.4 176.9h1.25M269.2 176.9h1.25M52.7 177.9h1.25M119.0 178.5h1.25M139.8 177.9h1.25M146.3 178.3h1.25M162.6 178.3h1.25M164.9 177.9h1.25M166.1 178.3h1.25M169.1 178.2h1.25M173.7 177.8h1.25M179.1 178.6h1.25M183.7 178.3h1.25M188.0 178.6h1.25M189.5 177.9h1.25M190.5 178.5h1.25M191.7 178.4h1.25M192.7 178.2h1.25M193.9 178.5h1.25M194.5 178.4h1.25M195.8 178.0h1.25M196.8 178.2h1.25M198.2 178.3h1.25M198.9 178.0h1.25M200.1 178.2h1.25M201.7 178.0h1.25M202.4 177.8h1.25M206.7 178.6h1.25M207.5 177.9h1.25M209.2 178.4h1.25M210.4 177.9h1.25M212.1 178.5h1.25M213.6 178.3h1.25M221.0 178.0h1.25M222.4 178.3h1.25M223.5 178.5h1.25M225.5 178.2h1.25M226.7 178.5h1.25M229.0 178.2h1.25M229.7 178.6h1.25M230.7 178.2h1.25M233.2 178.5h1.25M234.6 178.2h1.25M235.3 178.6h1.25M236.5 178.1h1.25M237.4 178.2h1.25M238.4 178.1h1.25M240.8 178.0h1.25M241.8 178.4h1.25M243.4 177.8h1.25M244.5 178.4h1.25M245.4 178.1h1.25M251.1 178.5h1.25M254.1 178.3h1.25M265.3 177.9h1.25M267.5 177.9h1.25M122.1 179.0h1.25M149.9 179.2h1.25M164.9 179.6h1.25M165.8 179.3h1.25M166.9 179.6h1.25M169.8 179.4h1.25M173.7 179.3h1.25M175.8 179.2h1.25M183.3 179.7h1.25M185.1 179.2h1.25M188.5 179.1h1.25M189.1 179.3h1.25M190.2 179.6h1.25M191.3 179.6h1.25M192.8 179.3h1.25M193.8 179.4h1.25M195.1 179.0h1.25M196.0 179.5h1.25M197.1 178.9h1.25M198.3 179.2h1.25M199.3 179.3h1.25M200.2 179.0h1.25M201.5 179.0h1.25M202.7 178.9h1.25M205.8 179.1h1.25M209.3 179.0h1.25M210.4 178.9h1.25M211.1 179.6h1.25M212.1 179.0h1.25M213.4 179.3h1.25M217.6 179.1h1.25M220.4 179.6h1.25M224.1 179.5h1.25M225.1 179.4h1.25M227.6 178.9h1.25M230.2 179.0h1.25M230.9 179.2h1.25M233.4 178.9h1.25M234.0 179.2h1.25M235.4 179.7h1.25M236.4 179.7h1.25M237.4 179.4h1.25M238.9 179.3h1.25M239.7 179.7h1.25M241.1 179.3h1.25M242.0 179.7h1.25M243.5 179.2h1.25M244.2 179.3h1.25M246.4 179.2h1.25M249.8 179.0h1.25M250.7 179.0h1.25M251.8 179.2h1.25M252.7 179.7h1.25M253.9 179.3h1.25M257.7 179.3h1.25M258.7 179.2h1.25M260.3 179.6h1.25M261.8 179.0h1.25M265.4 179.3h1.25M265.8 179.0h1.25M267.0 179.1h1.25M268.7 179.2h1.25M269.7 179.0h1.25M121.2 180.1h1.25M162.6 180.5h1.25M164.8 180.6h1.25M168.3 180.4h1.25M170.2 180.1h1.25M171.8 180.5h1.25M173.9 180.1h1.25M175.7 180.1h1.25M189.3 180.0h1.25M190.6 180.7h1.25M191.7 180.7h1.25M192.8 180.0h1.25M193.4 180.2h1.25M194.3 180.8h1.25M195.9 180.3h1.25M196.9 180.4h1.25M198.0 180.4h1.25M199.3 180.5h1.25M200.6 180.4h1.25M201.0 180.3h1.25M202.2 180.8h1.25M203.6 180.6h1.25M204.8 180.7h1.25M205.8 180.5h1.25M206.4 180.1h1.25M208.0 180.7h1.25M208.7 180.3h1.25M209.9 180.4h1.25M210.9 180.1h1.25M212.3 180.1h1.25M214.6 180.1h1.25M215.4 180.2h1.25M216.9 180.5h1.25M220.2 180.4h1.25M221.0 180.0h1.25M222.4 180.1h1.25M223.2 180.8h1.25M224.3 180.4h1.25M225.6 180.1h1.25M227.6 180.8h1.25M228.6 180.3h1.25M230.9 180.2h1.25M232.3 180.2h1.25M233.5 180.8h1.25M234.0 180.7h1.25M235.0 180.2h1.25M236.5 180.1h1.25M237.4 180.1h1.25M239.4 180.2h1.25M241.3 180.1h1.25M242.1 180.0h1.25M243.0 180.3h1.25M244.2 180.5h1.25M251.2 180.4h1.25M251.5 180.1h1.25M254.5 180.8h1.25M255.4 180.1h1.25M259.7 180.1h1.25M260.9 180.8h1.25M265.9 180.2h1.25M268.1 180.5h1.25M270.4 180.6h1.25M273.6 180.6h1.25M275.3 180.7h1.25M160.8 181.4h1.25M164.7 181.6h1.25M168.2 181.2h1.25M173.8 181.5h1.25M174.7 181.2h1.25M176.0 181.3h1.25M178.2 181.5h1.25M184.5 181.2h1.25M188.2 181.3h1.25M189.2 181.3h1.25M190.1 181.3h1.25M191.2 181.8h1.25M192.7 181.5h1.25M193.5 181.5h1.25M194.7 181.1h1.25M195.5 181.5h1.25M198.0 181.3h1.25M198.8 181.4h1.25M200.5 181.7h1.25M201.0 181.8h1.25M202.4 181.5h1.25M203.5 181.9h1.25M204.5 181.5h1.25M206.0 181.8h1.25M206.7 181.4h1.25M208.0 181.6h1.25M209.1 181.1h1.25M210.3 181.7h1.25M212.4 181.8h1.25M213.2 181.3h1.25M227.5 181.2h1.25M231.4 181.3h1.25M232.0 181.1h1.25M233.2 181.3h1.25M234.5 181.5h1.25M235.5 181.7h1.25M236.9 181.2h1.25M237.2 181.2h1.25M238.4 181.2h1.25M240.0 181.7h1.25M240.9 181.7h1.25M241.7 181.5h1.25M243.1 181.9h1.25M244.1 181.6h1.25M248.7 181.1h1.25M252.9 181.1h1.25M254.0 181.3h1.25M254.9 181.9h1.25M261.7 181.7h1.25M265.4 181.1h1.25M267.4 181.6h1.25M164.7 182.3h1.25M167.2 182.9h1.25M168.3 182.4h1.25M169.5 182.3h1.25M176.1 182.4h1.25M176.9 182.8h1.25M177.9 182.9h1.25M179.0 182.8h1.25M180.5 182.6h1.25M181.9 182.8h1.25M183.9 182.3h1.25M188.1 182.6h1.25M189.6 182.3h1.25M190.6 182.2h1.25M191.4 182.4h1.25M192.1 182.7h1.25M193.4 182.3h1.25M194.5 182.6h1.25M196.7 182.4h1.25M197.6 182.6h1.25M198.9 182.3h1.25M199.8 182.2h1.25M201.2 182.4h1.25M202.3 182.7h1.25M203.7 182.9h1.25M204.8 182.6h1.25M206.0 182.6h1.25M209.3 182.8h1.25M211.2 182.8h1.25M212.3 182.4h1.25M215.7 182.4h1.25M221.4 182.9h1.25M222.5 182.9h1.25M228.0 182.3h1.25M229.0 182.3h1.25M232.2 182.5h1.25M234.1 182.8h1.25M235.5 182.6h1.25M236.1 182.6h1.25M237.9 183.0h1.25M238.4 182.9h1.25M240.2 183.0h1.25M240.5 182.2h1.25M242.0 182.7h1.25M243.2 182.3h1.25M244.4 182.4h1.25M249.4 182.8h1.25M252.1 182.8h1.25M253.1 182.6h1.25M254.2 182.6h1.25M256.6 182.8h1.25M262.1 183.0h1.25M263.0 182.5h1.25M265.0 182.6h1.25M293.7 182.5h1.25M117.3 183.4h1.25M170.4 183.5h1.25M171.3 183.6h1.25M173.0 183.5h1.25M174.6 183.9h1.25M179.1 184.0h1.25M181.3 183.7h1.25M184.6 183.5h1.25M186.1 183.9h1.25M188.2 183.9h1.25M189.3 183.9h1.25M190.5 183.5h1.25M191.3 183.7h1.25M192.4 184.0h1.25M193.4 183.7h1.25M194.8 183.8h1.25M195.9 183.4h1.25M196.7 183.3h1.25M198.4 183.7h1.25M199.2 183.3h1.25M200.6 183.8h1.25M201.6 183.8h1.25M206.0 183.8h1.25M207.6 184.1h1.25M209.0 183.8h1.25M216.9 183.9h1.25M225.2 184.0h1.25M227.5 184.0h1.25M228.5 184.0h1.25M229.6 183.3h1.25M234.4 183.9h1.25M236.9 183.5h1.25M237.4 183.6h1.25M239.1 183.6h1.25M239.5 184.0h1.25M241.2 183.5h1.25M243.0 183.6h1.25M248.6 183.9h1.25M252.3 184.0h1.25M252.9 183.7h1.25M258.3 183.6h1.25M261.0 183.8h1.25M261.9 184.0h1.25M262.9 183.7h1.25M264.4 183.8h1.25M264.8 183.8h1.25M266.2 183.5h1.25M268.2 183.5h1.25M275.1 183.4h1.25M279.7 183.8h1.25M58.7 184.6h1.25M162.8 184.8h1.25M163.9 185.0h1.25M167.0 184.7h1.25M170.5 184.7h1.25M171.6 185.1h1.25M173.6 185.1h1.25M175.8 184.9h1.25M178.4 184.5h1.25M180.4 184.4h1.25M181.1 184.8h1.25M182.2 185.1h1.25M184.6 185.2h1.25M186.2 184.7h1.25M187.4 184.4h1.25M188.2 185.2h1.25M189.0 184.5h1.25M192.2 184.6h1.25M193.6 185.1h1.25M196.1 184.6h1.25M196.9 184.8h1.25M198.2 184.5h1.25M199.4 184.7h1.25M200.0 184.9h1.25M201.1 184.6h1.25M202.6 184.8h1.25M206.8 185.1h1.25M207.7 184.5h1.25M209.1 184.8h1.25M209.8 184.6h1.25M213.0 184.9h1.25M215.8 185.1h1.25M216.5 185.1h1.25M224.0 184.5h1.25M225.9 185.0h1.25M227.6 184.8h1.25M228.4 184.6h1.25M236.5 184.9h1.25M237.5 184.9h1.25M239.1 184.7h1.25M240.0 184.7h1.25M241.1 185.0h1.25M241.9 184.9h1.25M243.9 184.6h1.25M247.3 184.5h1.25M252.9 184.6h1.25M254.1 185.0h1.25M255.6 184.9h1.25M256.2 184.6h1.25M269.6 184.8h1.25M168.2 186.2h1.25M169.4 186.3h1.25M172.9 186.1h1.25M176.4 186.0h1.25M180.5 185.9h1.25M183.0 186.2h1.25M183.8 185.7h1.25M186.1 186.1h1.25M187.9 185.6h1.25M188.9 185.7h1.25M192.3 185.6h1.25M193.5 185.6h1.25M194.6 185.6h1.25M195.4 186.1h1.25M196.9 185.6h1.25M198.4 186.1h1.25M202.7 185.8h1.25M205.8 185.7h1.25M206.6 186.2h1.25M207.8 185.8h1.25M208.7 186.0h1.25M209.9 185.8h1.25M212.4 186.2h1.25M213.4 185.9h1.25M236.7 186.1h1.25M238.5 185.9h1.25M239.6 186.0h1.25M240.5 186.0h1.25M242.3 185.5h1.25M246.1 185.9h1.25M249.8 185.9h1.25M250.6 185.5h1.25M256.5 185.7h1.25M257.2 186.0h1.25M258.5 185.8h1.25M260.8 186.1h1.25M261.5 186.0h1.25M265.2 185.9h1.25M266.1 185.8h1.25M267.1 185.6h1.25M273.6 185.5h1.25M119.7 186.6h1.25M164.3 187.0h1.25M168.4 186.9h1.25M170.6 187.4h1.25M173.4 187.1h1.25M175.8 186.9h1.25M180.4 187.0h1.25M181.3 186.6h1.25M182.9 186.8h1.25M183.6 186.8h1.25M184.6 186.8h1.25M186.2 187.2h1.25M188.2 186.7h1.25M196.1 186.6h1.25M197.2 187.1h1.25M198.2 187.3h1.25M202.5 187.0h1.25M205.4 186.7h1.25M206.6 187.4h1.25M208.7 187.3h1.25M210.0 186.7h1.25M210.9 187.1h1.25M214.7 187.3h1.25M237.2 186.7h1.25M238.6 187.2h1.25M241.0 187.1h1.25M245.3 187.0h1.25M246.8 186.8h1.25M247.7 187.4h1.25M248.6 187.3h1.25M249.4 186.8h1.25M252.2 187.3h1.25M252.9 187.4h1.25M259.4 187.0h1.25M262.1 187.2h1.25M264.8 187.1h1.25M267.2 186.9h1.25M270.5 187.0h1.25M278.0 186.9h1.25M48.1 188.1h1.25M168.4 187.7h1.25M171.5 188.1h1.25M179.1 187.8h1.25M180.8 188.3h1.25M181.3 188.1h1.25M182.7 187.9h1.25M183.9 187.9h1.25M186.2 188.1h1.25M187.2 188.2h1.25M192.7 188.2h1.25M204.4 187.9h1.25M205.9 188.1h1.25M207.2 188.0h1.25M207.7 187.9h1.25M209.0 188.0h1.25M211.5 188.0h1.25M212.3 188.5h1.25M213.7 188.0h1.25M214.3 188.4h1.25M215.4 188.4h1.25M216.9 188.0h1.25M218.2 188.4h1.25M219.7 188.1h1.25M232.0 188.1h1.25M234.6 188.5h1.25M235.2 187.8h1.25M237.4 188.3h1.25M245.6 187.8h1.25M246.2 188.1h1.25M247.8 187.9h1.25M248.5 188.0h1.25M249.7 188.3h1.25M251.1 188.4h1.25M252.2 188.4h1.25M253.0 188.4h1.25M261.7 188.1h1.25M263.1 188.1h1.25M266.6 187.9h1.25M272.0 187.8h1.25M273.8 188.0h1.25M274.8 188.0h1.25M165.9 188.8h1.25M169.5 189.3h1.25M174.5 189.5h1.25M179.5 189.0h1.25M181.8 189.4h1.25M183.4 189.0h1.25M187.8 189.5h1.25M194.8 189.5h1.25M195.8 189.2h1.25M196.5 189.3h1.25M208.3 189.4h1.25M213.1 189.5h1.25M216.5 189.1h1.25M218.0 189.3h1.25M222.5 189.1h1.25M233.3 188.8h1.25M235.0 189.2h1.25M237.7 189.3h1.25M238.6 189.5h1.25M246.3 189.4h1.25M247.9 189.0h1.25M248.5 188.8h1.25M249.4 189.4h1.25M250.4 189.2h1.25M252.0 189.4h1.25M253.7 189.0h1.25M255.5 189.0h1.25M256.1 189.4h1.25M257.4 189.4h1.25M258.3 189.2h1.25M259.8 189.5h1.25M262.1 189.6h1.25M262.9 189.3h1.25M168.6 190.6h1.25M170.8 190.6h1.25M171.4 190.3h1.25M179.6 190.6h1.25M194.4 190.2h1.25M198.2 190.2h1.25M202.3 190.6h1.25M205.0 190.5h1.25M216.6 190.5h1.25M217.8 190.0h1.25M225.1 190.3h1.25M226.2 190.0h1.25M230.6 190.1h1.25M233.0 190.7h1.25M236.8 190.1h1.25M237.9 190.1h1.25M242.3 190.4h1.25M246.7 190.3h1.25M247.1 190.4h1.25M248.9 190.0h1.25M249.9 190.4h1.25M251.6 190.1h1.25M252.6 190.5h1.25M254.3 190.4h1.25M256.0 190.3h1.25M259.2 190.3h1.25M265.4 190.3h1.25M268.5 190.0h1.25M276.2 190.5h1.25M167.5 191.6h1.25M169.6 191.6h1.25M170.1 191.2h1.25M171.7 191.1h1.25M179.5 191.7h1.25M180.3 191.5h1.25M181.1 191.3h1.25M187.1 191.7h1.25M190.1 191.4h1.25M193.4 191.2h1.25M198.0 191.5h1.25M200.1 191.4h1.25M202.1 191.3h1.25M203.3 191.4h1.25M207.8 191.5h1.25M209.2 191.8h1.25M216.8 191.6h1.25M217.4 191.4h1.25M219.0 191.6h1.25M220.2 191.6h1.25M230.2 191.1h1.25M232.9 191.1h1.25M237.4 191.5h1.25M239.7 191.7h1.25M247.3 191.6h1.25M249.0 191.2h1.25M249.8 191.1h1.25M252.0 191.2h1.25M253.4 191.3h1.25M255.6 191.6h1.25M256.2 191.2h1.25M260.3 191.2h1.25M264.1 191.7h1.25M268.2 191.4h1.25M281.5 191.3h1.25M110.8 192.4h1.25M169.7 192.1h1.25M174.2 192.2h1.25M179.2 192.8h1.25M182.9 192.7h1.25M191.8 192.6h1.25M196.7 192.2h1.25M203.8 192.4h1.25M204.5 192.7h1.25M206.4 192.7h1.25M207.8 192.9h1.25M215.7 192.5h1.25M216.8 192.8h1.25M217.7 192.5h1.25M220.3 192.4h1.25M223.2 192.6h1.25M224.5 192.5h1.25M228.5 192.3h1.25M229.9 192.9h1.25M230.8 192.5h1.25M231.7 192.5h1.25M233.3 192.5h1.25M234.3 192.2h1.25M246.4 192.8h1.25M248.6 192.3h1.25M250.8 192.7h1.25M252.7 192.7h1.25M255.2 192.7h1.25M256.2 192.6h1.25M257.2 192.3h1.25M258.3 192.1h1.25M262.8 192.5h1.25M264.2 192.3h1.25M267.5 192.1h1.25M277.1 192.1h1.25M278.2 192.9h1.25M116.3 193.2h1.25M134.0 193.3h1.25M157.6 193.5h1.25M170.1 193.9h1.25M176.4 193.4h1.25M179.2 193.4h1.25M187.3 193.3h1.25M192.5 193.6h1.25M198.0 193.9h1.25M202.7 193.5h1.25M206.5 193.3h1.25M215.7 193.7h1.25M216.6 193.6h1.25M218.6 193.6h1.25M221.9 193.5h1.25M229.2 193.2h1.25M229.8 194.0h1.25M232.4 193.8h1.25M233.5 193.9h1.25M240.1 193.7h1.25M244.6 193.5h1.25M248.5 193.6h1.25M249.9 193.5h1.25M252.8 193.9h1.25M254.0 193.3h1.25M254.8 193.4h1.25M255.9 193.2h1.25M257.2 193.3h1.25M258.2 193.3h1.25M259.5 193.7h1.25M260.8 193.4h1.25M262.7 193.2h1.25M263.6 193.3h1.25M264.9 193.5h1.25M266.0 193.8h1.25M269.4 193.5h1.25M271.0 193.3h1.25M275.3 193.6h1.25M102.0 194.5h1.25M150.4 194.5h1.25M174.9 194.6h1.25M182.5 194.9h1.25M186.1 194.9h1.25M191.2 195.0h1.25M192.3 194.6h1.25M194.8 194.7h1.25M196.0 194.6h1.25M198.3 194.7h1.25M202.2 194.6h1.25M207.2 194.8h1.25M216.8 195.0h1.25M217.9 194.5h1.25M225.7 194.4h1.25M231.2 194.8h1.25M232.3 194.5h1.25M238.3 194.6h1.25M240.9 194.3h1.25M243.4 195.1h1.25M248.2 194.7h1.25M251.6 194.6h1.25M254.3 194.8h1.25M258.2 195.1h1.25M259.7 195.1h1.25M261.0 194.6h1.25M262.9 194.7h1.25M266.5 194.7h1.25M279.5 195.0h1.25M79.0 195.5h1.25M96.6 196.0h1.25M183.5 195.5h1.25M188.9 195.8h1.25M189.9 195.8h1.25M191.6 196.1h1.25M194.0 195.6h1.25M194.3 196.1h1.25M195.7 195.7h1.25M196.7 195.5h1.25M198.3 196.2h1.25M198.9 195.7h1.25M201.6 196.0h1.25M203.6 196.0h1.25M205.9 195.6h1.25M213.7 196.0h1.25M218.0 196.1h1.25M218.6 196.1h1.25M219.6 195.7h1.25M220.9 195.5h1.25M222.5 195.4h1.25M224.5 195.6h1.25M228.8 196.2h1.25M240.5 195.6h1.25M247.2 196.2h1.25M249.9 195.5h1.25M252.6 195.5h1.25M254.1 195.5h1.25M260.6 195.7h1.25M270.5 195.5h1.25M271.6 195.7h1.25M272.5 195.4h1.25M274.7 195.6h1.25M102.2 196.9h1.25M167.3 196.9h1.25M185.8 197.2h1.25M189.0 196.9h1.25M193.2 196.5h1.25M194.7 197.1h1.25M197.8 197.3h1.25M198.9 196.6h1.25M213.4 197.2h1.25M217.8 196.7h1.25M220.2 197.3h1.25M223.2 196.8h1.25M224.5 196.8h1.25M225.3 197.2h1.25M227.5 196.5h1.25M240.2 197.1h1.25M250.1 197.2h1.25M254.1 197.3h1.25M254.9 196.6h1.25M256.7 197.2h1.25M257.8 196.5h1.25M270.7 196.8h1.25M78.5 197.9h1.25M88.4 197.8h1.25M136.7 197.6h1.25M146.3 197.6h1.25M156.6 197.9h1.25M168.1 198.4h1.25M179.6 198.3h1.25M181.6 198.4h1.25M184.1 198.0h1.25M185.5 197.7h1.25M187.3 197.7h1.25M188.2 198.1h1.25M190.1 198.4h1.25M196.0 198.1h1.25M196.9 197.8h1.25M200.4 198.2h1.25M202.1 197.7h1.25M204.7 198.0h1.25M206.6 198.0h1.25M209.3 198.0h1.25M218.1 197.7h1.25M218.8 197.8h1.25M221.4 198.3h1.25M222.9 198.0h1.25M229.1 197.9h1.25M242.9 198.1h1.25M243.9 198.2h1.25M259.7 198.3h1.25M261.6 197.7h1.25M265.3 197.6h1.25M269.7 197.8h1.25M270.8 198.2h1.25M278.4 198.0h1.25M281.5 197.7h1.25M81.1 198.9h1.25M82.2 199.2h1.25M93.8 199.2h1.25M98.7 198.7h1.25M108.5 199.1h1.25M116.9 199.2h1.25M154.7 198.9h1.25M172.4 199.3h1.25M173.7 199.3h1.25M175.7 199.0h1.25M177.1 198.7h1.25M182.9 199.2h1.25M184.0 198.8h1.25M184.6 199.3h1.25M185.5 199.0h1.25M188.0 199.2h1.25M189.2 199.4h1.25M190.0 198.9h1.25M191.2 198.9h1.25M193.3 199.0h1.25M196.1 198.9h1.25M197.7 199.2h1.25M200.2 199.4h1.25M204.3 199.0h1.25M207.8 199.5h1.25M212.2 199.4h1.25M217.8 199.0h1.25M221.3 199.3h1.25M221.9 199.4h1.25M223.1 199.0h1.25M225.8 199.3h1.25M226.8 199.3h1.25M227.5 199.1h1.25M230.2 198.9h1.25M237.6 199.2h1.25M247.2 198.8h1.25M250.9 199.2h1.25M255.1 198.8h1.25M256.0 198.9h1.25M259.7 199.5h1.25M261.0 198.8h1.25M270.5 199.5h1.25M273.6 199.1h1.25M274.7 199.2h1.25M280.3 198.7h1.25M286.2 199.0h1.25M73.6 200.3h1.25M101.5 200.0h1.25M157.3 200.1h1.25M180.2 200.2h1.25M181.7 199.8h1.25M182.3 199.8h1.25M183.4 199.9h1.25M185.2 200.6h1.25M186.8 200.1h1.25M189.1 200.0h1.25M191.0 200.1h1.25M192.7 200.6h1.25M199.9 200.3h1.25M202.3 200.4h1.25M204.9 200.2h1.25M205.4 200.6h1.25M206.6 200.3h1.25M215.7 200.0h1.25M218.6 200.4h1.25M219.6 200.1h1.25M221.4 200.0h1.25M221.9 200.2h1.25M224.1 200.0h1.25M225.4 200.1h1.25M228.8 200.0h1.25M231.0 200.1h1.25M243.1 200.0h1.25M244.2 200.3h1.25M247.6 200.4h1.25M249.4 200.3h1.25M252.1 200.2h1.25M252.8 200.0h1.25M254.9 200.6h1.25M257.0 200.1h1.25M260.0 200.3h1.25M270.8 200.4h1.25M271.5 200.5h1.25M273.0 200.2h1.25M90.4 201.7h1.25M95.9 201.0h1.25M171.8 201.5h1.25M187.9 201.2h1.25M190.2 200.9h1.25M191.2 201.2h1.25M192.4 201.6h1.25M193.5 201.3h1.25M194.8 201.5h1.25M201.3 201.5h1.25M213.2 201.6h1.25M218.8 201.6h1.25M222.6 201.6h1.25M223.2 200.9h1.25M224.7 201.1h1.25M227.8 201.3h1.25M232.8 201.4h1.25M241.6 201.6h1.25M244.2 201.3h1.25M248.4 201.0h1.25M252.6 201.1h1.25M255.1 201.4h1.25M256.4 201.4h1.25M266.2 201.7h1.25M270.6 201.2h1.25M280.8 201.1h1.25M81.6 202.5h1.25M148.4 202.4h1.25M180.3 202.5h1.25M181.1 202.2h1.25M188.2 202.1h1.25M190.2 202.4h1.25M194.7 202.4h1.25M199.1 202.6h1.25M200.6 202.7h1.25M201.4 202.2h1.25M202.7 202.7h1.25M204.6 202.5h1.25M205.8 202.8h1.25M208.1 202.5h1.25M209.3 202.7h1.25M214.3 202.7h1.25M215.4 202.2h1.25M216.9 202.5h1.25M219.0 202.4h1.25M220.9 202.1h1.25M223.4 202.2h1.25M227.5 202.6h1.25M230.2 202.5h1.25M231.4 202.4h1.25M232.0 202.7h1.25M238.9 202.5h1.25M242.0 202.6h1.25M245.6 202.8h1.25M246.6 202.5h1.25M247.3 202.1h1.25M248.4 202.1h1.25M252.9 202.4h1.25M254.1 202.7h1.25M255.2 202.8h1.25M256.0 202.4h1.25M258.6 202.5h1.25M268.5 202.5h1.25M279.7 202.3h1.25M280.1 202.5h1.25M126.7 203.6h1.25M194.4 203.7h1.25M202.4 203.6h1.25M205.4 203.9h1.25M206.6 203.7h1.25M207.6 203.4h1.25M208.9 203.4h1.25M211.6 203.4h1.25M212.1 203.2h1.25M213.7 203.9h1.25M226.4 203.8h1.25M230.2 203.8h1.25M231.2 203.7h1.25M235.6 203.2h1.25M237.9 203.6h1.25M241.7 203.7h1.25M246.4 203.2h1.25M248.3 203.2h1.25M256.7 203.4h1.25M258.4 203.3h1.25M260.9 203.3h1.25M262.1 203.1h1.25M267.3 203.6h1.25M271.9 203.6h1.25M280.9 203.4h1.25M83.4 204.2h1.25M150.7 204.7h1.25M183.9 204.7h1.25M198.4 204.5h1.25M201.3 204.6h1.25M207.0 204.5h1.25M209.3 204.9h1.25M210.2 204.8h1.25M212.6 204.7h1.25M213.5 205.0h1.25M225.6 204.3h1.25M226.7 204.9h1.25M228.7 204.4h1.25M229.9 204.7h1.25M232.2 204.8h1.25M233.1 204.6h1.25M240.9 205.0h1.25M242.7 204.6h1.25M244.9 204.8h1.25M249.5 204.9h1.25M255.5 204.8h1.25M257.7 204.6h1.25M258.1 204.3h1.25M261.1 204.7h1.25M261.8 204.5h1.25M268.7 204.7h1.25M273.8 204.2h1.25M275.1 204.3h1.25M78.1 205.6h1.25M145.5 205.7h1.25M150.9 205.7h1.25M161.9 206.0h1.25M196.1 205.9h1.25M198.2 205.3h1.25M199.4 205.6h1.25M200.4 205.8h1.25M203.2 205.7h1.25M206.8 205.5h1.25M209.4 205.4h1.25M209.7 205.5h1.25M211.6 205.9h1.25M212.7 205.4h1.25M213.5 205.7h1.25M215.5 205.4h1.25M216.8 206.0h1.25M229.0 205.5h1.25M238.6 205.4h1.25M243.2 206.0h1.25M244.3 206.1h1.25M249.7 206.0h1.25M259.3 205.7h1.25M260.5 205.4h1.25M263.1 205.4h1.25M172.4 206.7h1.25M176.4 207.2h1.25M179.2 207.2h1.25M197.8 206.8h1.25M201.0 206.6h1.25M203.4 207.2h1.25M204.4 207.2h1.25M206.0 206.6h1.25M206.8 206.9h1.25M209.3 206.6h1.25M210.3 207.1h1.25M211.1 207.0h1.25M213.3 206.8h1.25M214.9 207.1h1.25M215.6 206.5h1.25M218.7 206.5h1.25M222.1 206.4h1.25M224.3 206.7h1.25M226.7 206.5h1.25M227.7 206.9h1.25M229.9 206.9h1.25M231.8 207.0h1.25M235.3 207.0h1.25M241.9 206.4h1.25M248.6 206.9h1.25M249.8 207.0h1.25M263.1 206.5h1.25M263.8 207.1h1.25M92.5 207.6h1.25M136.6 208.0h1.25M145.5 208.0h1.25M164.1 207.7h1.25M166.0 208.0h1.25M174.5 208.0h1.25M183.5 208.1h1.25M185.9 207.7h1.25M196.7 207.7h1.25M198.4 208.1h1.25M199.3 207.9h1.25M200.3 208.1h1.25M202.6 207.8h1.25M204.5 208.1h1.25M205.9 207.6h1.25M210.2 207.5h1.25M210.9 208.2h1.25M212.5 207.6h1.25M213.7 207.5h1.25M216.8 207.9h1.25M219.0 208.1h1.25M224.7 207.6h1.25M227.4 207.9h1.25M231.1 207.8h1.25M240.6 207.8h1.25M245.4 208.3h1.25M250.5 208.0h1.25M259.9 208.0h1.25M262.7 207.8h1.25M84.5 208.8h1.25M161.4 209.4h1.25M181.4 208.9h1.25M218.5 209.1h1.25M220.0 209.1h1.25M244.0 209.0h1.25M247.2 209.1h1.25M248.9 208.7h1.25M261.5 208.9h1.25M262.6 209.1h1.25M88.3 210.1h1.25M124.1 209.8h1.25M136.6 209.9h1.25M171.6 210.4h1.25M177.0 209.8h1.25M223.2 210.4h1.25M245.3 210.2h1.25M248.8 210.0h1.25M255.2 209.9h1.25M261.7 210.4h1.25M262.9 209.8h1.25M263.9 210.5h1.25M265.2 210.1h1.25M283.5 210.0h1.25M78.8 211.5h1.25M133.0 210.9h1.25M179.6 211.3h1.25M183.9 211.1h1.25M199.5 211.3h1.25M208.6 211.1h1.25M211.0 211.5h1.25M215.2 211.3h1.25M223.2 211.5h1.25M229.1 211.3h1.25M256.4 211.5h1.25M257.5 211.6h1.25M259.8 210.8h1.25M260.8 211.0h1.25M263.1 211.6h1.25M264.3 211.0h1.25M264.9 210.9h1.25M269.4 211.3h1.25M270.6 211.5h1.25M93.4 211.9h1.25M114.6 212.4h1.25M125.7 212.5h1.25M127.2 212.3h1.25M158.5 212.5h1.25M178.6 212.2h1.25M196.0 212.0h1.25M203.1 212.6h1.25M229.9 212.2h1.25M240.0 212.3h1.25M260.9 211.9h1.25M262.0 212.6h1.25M262.8 212.4h1.25M263.7 212.3h1.25M268.4 212.5h1.25M269.3 212.3h1.25M270.2 212.7h1.25M83.4 213.1h1.25M127.8 213.5h1.25M130.8 213.6h1.25M135.3 213.8h1.25M156.3 213.0h1.25M186.9 213.6h1.25M203.4 213.0h1.25M222.9 213.5h1.25M232.1 213.2h1.25M236.5 213.8h1.25M240.1 213.2h1.25M252.6 213.0h1.25M254.3 213.5h1.25M255.5 213.4h1.25M257.2 213.2h1.25M258.7 213.5h1.25M259.2 213.3h1.25M266.1 213.7h1.25M267.2 213.1h1.25M270.5 213.6h1.25M158.7 214.2h1.25M190.5 214.9h1.25M228.8 214.4h1.25M236.1 214.2h1.25M253.7 214.6h1.25M258.7 214.2h1.25M262.6 214.8h1.25M267.2 214.3h1.25M268.6 214.2h1.25M270.4 214.2h1.25M131.9 215.9h1.25M156.4 215.3h1.25M163.1 215.4h1.25M168.6 215.4h1.25M169.7 215.5h1.25M179.7 215.3h1.25M182.4 215.7h1.25M185.9 215.7h1.25M194.5 215.8h1.25M235.1 215.6h1.25M262.2 215.2h1.25M266.6 216.0h1.25M267.2 215.4h1.25M268.5 215.4h1.25M269.6 215.9h1.25M271.5 215.7h1.25M132.3 216.4h1.25M143.8 217.0h1.25M161.8 216.5h1.25M225.4 217.1h1.25M226.4 216.6h1.25M229.9 216.4h1.25M236.7 216.5h1.25M252.1 216.6h1.25M255.0 216.4h1.25M263.7 216.9h1.25M267.6 216.8h1.25M132.7 218.2h1.25M161.0 217.9h1.25M225.5 218.0h1.25M236.1 217.8h1.25M237.9 218.0h1.25M265.8 217.7h1.25M267.2 217.5h1.25M171.8 218.5h1.25M172.3 219.2h1.25M195.6 219.2h1.25M199.4 218.6h1.25M222.4 219.1h1.25M239.7 218.7h1.25M246.2 219.3h1.25M258.2 218.9h1.25M265.2 219.1h1.25M265.8 219.0h1.25M129.5 219.8h1.25M131.6 220.0h1.25M133.1 219.9h1.25M186.9 219.7h1.25M226.8 220.3h1.25M246.8 220.3h1.25M250.8 220.4h1.25M266.0 219.9h1.25M166.9 221.1h1.25M180.1 221.5h1.25M189.4 221.2h1.25M190.2 220.7h1.25M203.5 221.0h1.25M221.3 221.4h1.25M222.5 221.5h1.25M222.9 221.5h1.25M225.6 220.8h1.25M228.5 221.4h1.25M233.0 221.1h1.25M261.4 221.2h1.25M159.4 222.2h1.25M161.4 221.8h1.25M173.1 221.8h1.25M176.1 222.5h1.25M180.1 222.1h1.25M181.1 222.0h1.25M204.7 222.0h1.25M209.1 222.4h1.25M220.0 222.3h1.25M221.9 222.5h1.25M248.3 222.5h1.25M250.4 222.1h1.25M171.6 223.0h1.25M175.2 223.7h1.25M180.5 223.1h1.25M195.0 223.1h1.25M202.5 223.3h1.25M203.6 223.0h1.25M206.8 222.9h1.25M215.9 223.5h1.25M222.6 223.5h1.25M223.3 223.7h1.25M226.8 223.3h1.25M228.0 223.4h1.25M245.2 223.2h1.25M246.4 223.0h1.25M275.2 223.6h1.25M170.6 224.8h1.25M174.9 224.7h1.25M195.1 224.1h1.25M203.4 224.6h1.25M214.7 224.8h1.25M216.8 224.4h1.25M217.7 224.1h1.25M222.6 224.4h1.25M223.6 224.3h1.25M226.4 224.6h1.25M228.0 224.1h1.25M233.4 224.1h1.25M234.5 224.0h1.25M247.3 224.8h1.25M248.8 224.6h1.25M167.1 225.3h1.25M197.9 225.3h1.25M201.4 225.7h1.25M220.3 225.5h1.25M221.4 225.1h1.25M221.9 225.7h1.25M223.7 225.3h1.25M224.8 225.5h1.25M226.3 225.5h1.25M228.6 225.2h1.25M233.1 225.6h1.25M237.4 225.5h1.25M276.9 225.3h1.25M177.4 226.4h1.25M188.2 226.2h1.25M195.7 226.5h1.25M197.2 226.9h1.25M205.7 226.5h1.25M217.5 226.8h1.25M219.1 226.3h1.25M220.0 226.7h1.25M221.5 226.5h1.25M223.5 226.2h1.25M224.3 226.5h1.25M226.6 226.2h1.25M229.0 226.4h1.25M232.4 226.5h1.25M233.4 226.3h1.25M278.6 226.3h1.25M281.8 226.7h1.25M135.6 227.9h1.25M167.3 227.3h1.25M172.0 227.6h1.25M179.7 228.0h1.25M197.1 228.0h1.25M201.6 228.0h1.25M202.0 227.4h1.25M213.6 227.4h1.25M214.5 228.1h1.25M216.0 227.5h1.25M216.9 227.5h1.25M220.9 228.0h1.25M222.4 227.9h1.25M224.2 227.9h1.25M225.5 228.0h1.25M226.4 228.1h1.25M229.0 227.3h1.25M230.2 227.7h1.25M231.0 228.0h1.25M235.8 227.4h1.25M246.7 227.9h1.25M205.5 229.1h1.25M217.4 228.7h1.25M218.9 229.1h1.25M222.0 229.0h1.25M223.2 228.9h1.25M224.1 228.9h1.25M225.9 229.1h1.25M226.2 228.5h1.25M227.7 228.9h1.25M229.6 228.8h1.25M264.0 228.7h1.25M278.3 228.8h1.25M158.8 229.8h1.25M160.8 229.9h1.25M167.0 229.7h1.25M209.1 230.3h1.25M217.7 229.9h1.25M223.3 230.3h1.25M224.3 230.0h1.25M227.4 230.2h1.25M229.2 230.1h1.25M230.9 229.6h1.25M158.5 231.2h1.25M166.0 231.2h1.25M173.8 231.2h1.25M202.6 231.1h1.25M208.7 231.0h1.25M222.5 230.6h1.25M223.4 230.6h1.25M224.3 230.7h1.25M225.3 231.1h1.25M227.5 230.9h1.25M229.8 231.0h1.25M231.9 231.2h1.25M233.9 230.9h1.25M235.6 231.3h1.25M236.7 230.8h1.25M239.5 231.1h1.25M110.2 232.2h1.25M114.1 231.9h1.25M138.3 231.9h1.25M140.0 232.2h1.25M155.1 232.0h1.25M162.9 231.9h1.25M175.2 232.2h1.25M182.5 232.4h1.25M185.8 232.0h1.25M203.5 232.0h1.25M204.8 232.5h1.25M206.4 232.2h1.25M219.8 231.8h1.25M223.0 232.4h1.25M226.5 231.8h1.25M227.4 231.9h1.25M230.9 231.9h1.25M232.5 232.3h1.25M232.9 232.2h1.25M253.4 232.1h1.25M137.3 233.1h1.25M165.4 233.6h1.25M179.5 233.0h1.25M181.1 233.0h1.25M194.7 233.6h1.25M201.1 232.8h1.25M205.5 233.5h1.25M207.7 233.4h1.25M209.3 232.9h1.25M215.4 232.9h1.25M221.4 233.2h1.25M223.3 233.2h1.25M224.2 233.6h1.25M228.6 233.1h1.25M229.9 233.3h1.25M233.4 233.2h1.25M234.4 233.2h1.25M235.6 233.1h1.25M240.1 233.2h1.25M241.2 233.0h1.25M255.2 232.9h1.25M257.5 232.9h1.25M160.9 234.3h1.25M178.1 234.4h1.25M185.9 234.2h1.25M199.4 234.2h1.25M207.7 234.0h1.25M215.7 234.6h1.25M216.8 234.5h1.25M217.9 234.5h1.25M219.8 234.0h1.25M220.7 234.6h1.25M221.9 234.3h1.25M223.2 234.4h1.25M227.6 234.5h1.25M230.2 234.4h1.25M232.3 234.4h1.25M235.8 234.2h1.25M250.5 234.4h1.25M255.4 234.1h1.25M96.1 235.0h1.25M109.9 235.6h1.25M176.8 235.5h1.25M178.1 235.3h1.25M188.2 235.7h1.25M201.2 235.5h1.25M208.7 235.6h1.25M217.6 235.3h1.25M218.8 235.7h1.25M221.4 235.1h1.25M222.1 235.2h1.25M223.5 235.8h1.25M224.2 235.4h1.25M225.6 235.7h1.25M228.7 235.7h1.25M231.2 235.4h1.25M233.1 235.1h1.25M249.3 235.5h1.25M253.9 235.4h1.25M84.6 236.3h1.25M110.0 236.1h1.25M176.2 236.3h1.25M178.4 236.3h1.25M201.1 236.7h1.25M205.9 236.2h1.25M215.6 236.4h1.25M217.0 236.3h1.25M217.8 236.1h1.25M218.8 236.4h1.25M220.0 236.2h1.25M221.4 236.9h1.25M221.9 236.5h1.25M227.4 236.8h1.25M232.4 236.7h1.25M233.5 236.3h1.25M106.9 237.4h1.25M134.0 237.6h1.25M164.9 238.0h1.25M206.0 237.9h1.25M209.2 237.7h1.25M209.9 237.8h1.25M216.0 237.5h1.25M219.1 237.7h1.25M223.5 237.3h1.25M230.0 237.7h1.25M230.7 237.4h1.25M233.0 237.5h1.25M278.3 237.9h1.25M92.4 238.4h1.25M109.8 238.8h1.25M164.6 238.6h1.25M174.1 238.5h1.25M184.0 238.5h1.25M186.8 238.7h1.25M198.8 238.7h1.25M201.7 238.4h1.25M216.8 238.8h1.25M218.0 238.7h1.25M220.0 238.9h1.25M220.9 238.4h1.25M226.4 238.5h1.25M235.2 238.4h1.25M251.1 238.9h1.25M98.9 239.4h1.25M160.9 239.5h1.25M164.1 239.7h1.25M165.9 239.8h1.25M181.5 240.0h1.25M189.5 240.2h1.25M202.3 239.6h1.25M208.8 239.6h1.25M215.5 239.6h1.25M219.0 239.5h1.25M219.9 239.6h1.25M237.9 240.2h1.25M246.5 239.6h1.25M279.2 240.2h1.25M96.7 240.8h1.25M142.2 240.7h1.25M144.0 240.8h1.25M169.7 240.8h1.25M186.7 241.0h1.25M204.3 240.8h1.25M214.2 240.7h1.25M221.9 241.0h1.25M233.0 241.1h1.25M242.9 240.6h1.25M268.7 240.7h1.25M86.1 242.2h1.25M136.4 242.4h1.25M141.0 241.7h1.25M204.9 241.9h1.25M205.4 242.0h1.25M224.1 241.8h1.25M233.9 242.4h1.25M246.4 242.1h1.25M87.1 243.2h1.25M107.7 243.4h1.25M191.5 243.0h1.25M195.0 243.4h1.25M199.9 243.4h1.25M222.2 242.8h1.25M134.9 244.0h1.25M173.7 244.4h1.25M190.2 244.4h1.25M193.6 244.0h1.25M215.5 243.9h1.25M228.1 244.5h1.25M233.4 244.0h1.25M265.9 244.4h1.25M266.9 244.5h1.25M116.7 245.4h1.25M124.2 245.1h1.25M136.6 245.1h1.25M248.9 245.1h1.25M105.8 246.5h1.25M209.4 246.7h1.25M255.1 246.1h1.25M258.9 246.4h1.25M259.3 246.1h1.25M260.4 246.5h1.25M122.8 247.7h1.25M151.7 247.5h1.25M159.3 247.8h1.25M201.5 247.5h1.25M211.0 247.9h1.25M215.2 247.4h1.25M250.6 247.8h1.25M258.8 247.8h1.25M103.5 248.8h1.25M107.6 248.3h1.25M118.7 248.2h1.25M146.1 248.9h1.25M151.7 248.9h1.25M140.6 249.9h1.25M182.3 249.6h1.25M190.4 249.3h1.25M125.0 250.5h1.25M148.4 251.1h1.25M171.5 250.5h1.25M172.9 251.0h1.25M220.1 250.8h1.25M123.6 251.5h1.25M170.1 251.6h1.25M193.2 251.8h1.25M229.6 251.6h1.25M281.6 251.8h1.25M176.2 253.2h1.25M181.6 252.9h1.25M187.9 253.3h1.25M245.2 253.1h1.25M177.8 254.2h1.25M161.6 255.0h1.25M125.2 257.6h1.25M158.5 257.0h1.25M253.4 257.5h1.25M279.1 258.6h1.25M134.2 259.6h1.25M204.3 259.5h1.25M281.6 259.8h1.25M136.2 260.6h1.25M170.7 260.7h1.25M186.0 260.6h1.25M192.5 260.7h1.25M225.4 263.3h1.25M109.7 263.7h1.25M145.9 265.9h1.25M211.0 267.4h1.25M106.4 268.4h1.25M119.0 268.6h1.25M301.2 268.4h1.25M307.8 268.5h1.25M309.9 269.6h1.25M100.0 270.9h1.25M102.2 270.9h1.25M313.5 271.7h1.25M108.2 272.7h1.25M133.4 274.0h1.25M300.0 273.9h1.25M134.5 274.8h1.25M138.3 276.3h1.25M132.9 277.5h1.25M129.4 278.0h1.25M130.8 278.5h1.25M130.7 282.8h1.25M133.1 284.7h1.25M131.0 291.5h1.25M133.4 291.8h1.25M131.6 292.3h1.25M128.8 293.8h1.25M128.4 295.6h1.25M125.2 299.1h1.25M120.7 301.2h1.25M118.5 307.1h1.25M109.8 313.8h1.25M108.0 314.5h1.25M105.6 315.3h1.25M118.5 316.1h1.25M107.1 317.6h1.25M124.3 318.3h1.25M121.2 322.4h1.25M121.9 323.6h1.25M117.4 328.1h1.25M107.9 336.4h1.25M108.1 338.0h1.25M124.0 121.0h1.25M279.4 111.0h1.25M296.7 132.7h1.25"/><path stroke="#1f77b4" stroke-width="1.25" d="M214.2 60.7h1.25M211.2 74.8h1.25M239.8 74.9h1.25M211.6 76.3h1.25M213.2 75.6h1.25M239.7 76.2h1.25M189.0 80.6h1.25M181.2 86.8h1.25M141.6 89.8h1.25M239.5 90.2h1.25M143.9 91.5h1.25M144.2 92.1h1.25M141.7 93.3h1.25M144.3 93.3h1.25M145.0 94.5h1.25M148.6 94.3h1.25M239.6 94.4h1.25M106.4 96.9h1.25M110.1 96.7h1.25M142.3 96.8h1.25M180.2 97.0h1.25M108.7 98.3h1.25M114.0 98.3h1.25M141.0 97.7h1.25M207.9 98.2h1.25M103.2 99.3h1.25M107.4 98.8h1.25M109.6 98.7h1.25M111.2 98.7h1.25M143.3 99.4h1.25M149.2 98.6h1.25M104.6 100.1h1.25M108.9 100.3h1.25M111.3 100.3h1.25M115.8 100.0h1.25M141.1 100.4h1.25M143.2 100.4h1.25M107.9 101.1h1.25M109.0 100.9h1.25M110.4 101.5h1.25M141.8 101.4h1.25M181.7 100.8h1.25M217.8 101.0h1.25M103.4 102.4h1.25M106.5 101.9h1.25M109.2 102.4h1.25M111.4 102.2h1.25M112.0 102.2h1.25M113.6 102.6h1.25M140.8 102.6h1.25M219.8 102.2h1.25M225.5 102.2h1.25M141.0 103.5h1.25M146.3 103.0h1.25M215.7 103.4h1.25M223.4 103.6h1.25M110.1 104.3h1.25M110.8 104.1h1.25M145.1 104.7h1.25M159.5 105.7h1.25M221.0 105.7h1.25M223.5 106.0h1.25M143.1 106.5h1.25M146.6 106.8h1.25M147.2 107.0h1.25M148.9 106.7h1.25M152.8 107.0h1.25M186.9 106.4h1.25M214.7 107.5h1.25M174.9 109.1h1.25M221.3 109.3h1.25M193.6 109.8h1.25M197.0 110.0h1.25M224.4 109.8h1.25M226.9 110.3h1.25M229.1 110.4h1.25M167.3 110.9h1.25M136.6 111.9h1.25M138.5 112.6h1.25M152.8 112.5h1.25M134.0 113.4h1.25M144.3 113.0h1.25M151.6 113.1h1.25M157.2 113.2h1.25M178.3 113.4h1.25M188.4 113.4h1.25M189.0 113.5h1.25M226.9 113.2h1.25M164.2 114.2h1.25M131.2 115.4h1.25M131.7 115.4h1.25M141.5 115.3h1.25M151.8 115.7h1.25M166.9 115.1h1.25M181.2 115.3h1.25M232.8 115.9h1.25M131.1 116.5h1.25M132.0 116.5h1.25M133.8 116.8h1.25M182.3 116.6h1.25M229.9 116.2h1.25M136.6 117.9h1.25M143.1 117.6h1.25M156.2 118.1h1.25M205.5 118.0h1.25M220.2 118.0h1.25M225.8 118.0h1.25M229.0 117.9h1.25M138.8 118.5h1.25M139.7 118.4h1.25M187.1 118.9h1.25M225.4 119.2h1.25M137.7 120.1h1.25M139.3 120.0h1.25M175.8 120.2h1.25M194.7 120.3h1.25M209.4 120.0h1.25M227.4 120.0h1.25M140.8 120.7h1.25M143.1 120.6h1.25M144.0 121.0h1.25M185.8 120.8h1.25M136.4 121.9h1.25M147.0 121.8h1.25M181.4 122.4h1.25M188.8 122.5h1.25M226.3 122.4h1.25M266.2 122.4h1.25M149.6 123.6h1.25M151.9 122.9h1.25M181.5 122.9h1.25M257.5 123.1h1.25M259.6 123.6h1.25M266.5 123.4h1.25M288.1 123.0h1.25M139.8 124.4h1.25M141.0 124.1h1.25M143.4 124.6h1.25M139.8 125.4h1.25M166.0 125.6h1.25M172.4 125.1h1.25M197.9 125.2h1.25M266.1 125.5h1.25M287.0 125.4h1.25M142.2 126.4h1.25M167.3 126.3h1.25M170.2 126.3h1.25M184.5 126.3h1.25M193.5 126.7h1.25M264.8 126.7h1.25M266.5 126.9h1.25M184.7 127.5h1.25M191.7 127.4h1.25M193.5 127.5h1.25M194.6 127.4h1.25M197.1 127.6h1.25M253.1 127.3h1.25M188.5 128.8h1.25M204.3 128.7h1.25M253.8 128.4h1.25M259.9 128.4h1.25M261.5 128.9h1.25M264.9 128.5h1.25M267.3 128.9h1.25M135.2 130.2h1.25M143.0 129.8h1.25M179.6 129.9h1.25M183.9 130.1h1.25M186.3 129.9h1.25M231.2 130.0h1.25M232.0 129.5h1.25M255.6 129.4h1.25M259.3 129.9h1.25M134.0 131.1h1.25M175.8 131.2h1.25M181.4 130.9h1.25M190.7 131.1h1.25M131.1 132.2h1.25M149.4 132.3h1.25M158.4 131.7h1.25M159.1 132.3h1.25M189.2 132.4h1.25M199.4 131.8h1.25M257.7 131.8h1.25M261.8 131.7h1.25M270.4 132.0h1.25M141.8 133.1h1.25M233.1 133.2h1.25M237.4 133.3h1.25M261.1 133.2h1.25M270.3 132.8h1.25M133.3 133.9h1.25M191.3 133.9h1.25M229.8 134.2h1.25M231.2 134.5h1.25M258.4 134.4h1.25M259.8 134.3h1.25M265.8 134.1h1.25M267.4 133.9h1.25M149.6 135.5h1.25M155.2 135.0h1.25M166.1 135.0h1.25M169.8 135.3h1.25M182.9 135.1h1.25M234.1 135.4h1.25M236.4 135.6h1.25M256.3 135.0h1.25M265.4 135.7h1.25M266.3 135.0h1.25M270.3 135.7h1.25M153.0 136.2h1.25M154.2 136.3h1.25M227.5 136.5h1.25M260.7 136.3h1.25M262.0 136.6h1.25M262.9 136.8h1.25M264.3 136.3h1.25M266.3 136.7h1.25M267.3 136.3h1.25M268.3 136.0h1.25M269.8 136.6h1.25M270.8 136.2h1.25M271.4 136.1h1.25M181.2 137.8h1.25M195.9 137.8h1.25M233.4 137.3h1.25M255.4 137.2h1.25M262.9 137.8h1.25M267.6 137.4h1.25M268.1 137.8h1.25M271.9 137.4h1.25M274.1 137.9h1.25M151.5 138.4h1.25M163.7 138.7h1.25M168.2 138.7h1.25M189.3 138.3h1.25M190.3 138.6h1.25M263.0 138.8h1.25M264.0 138.9h1.25M266.4 138.3h1.25M267.1 138.6h1.25M269.5 138.4h1.25M270.6 138.2h1.25M271.9 138.7h1.25M276.1 138.5h1.25M154.3 139.8h1.25M168.1 139.3h1.25M188.2 139.4h1.25M253.2 140.0h1.25M253.7 139.6h1.25M257.4 139.9h1.25M258.2 139.7h1.25M259.2 139.5h1.25M263.3 139.9h1.25M263.8 139.5h1.25M264.9 139.7h1.25M266.1 139.6h1.25M267.4 139.3h1.25M269.7 140.0h1.25M270.9 139.7h1.25M272.0 139.6h1.25M162.8 141.2h1.25M166.4 140.6h1.25M191.2 140.7h1.25M207.0 140.6h1.25M249.4 141.1h1.25M256.5 141.0h1.25M257.0 140.7h1.25M262.7 140.7h1.25M266.0 140.6h1.25M267.2 140.7h1.25M270.7 140.9h1.25M272.1 140.6h1.25M273.1 140.6h1.25M147.5 142.3h1.25M163.9 141.6h1.25M165.9 141.6h1.25M168.2 141.6h1.25M169.6 141.9h1.25M250.8 142.0h1.25M258.4 142.2h1.25M260.7 142.0h1.25M261.7 142.0h1.25M263.1 142.0h1.25M265.4 142.2h1.25M267.3 141.7h1.25M271.5 141.9h1.25M272.8 142.0h1.25M152.0 143.2h1.25M163.8 142.8h1.25M186.9 142.7h1.25M251.9 143.2h1.25M252.7 143.3h1.25M262.5 142.8h1.25M264.2 142.9h1.25M269.4 143.2h1.25M123.5 144.2h1.25M125.6 144.2h1.25M154.7 144.2h1.25M165.4 143.8h1.25M171.5 144.2h1.25M263.8 144.3h1.25M132.9 145.4h1.25M138.4 145.1h1.25M157.5 145.2h1.25M248.9 145.0h1.25M129.9 146.0h1.25M247.2 146.6h1.25M257.1 146.0h1.25M125.8 147.2h1.25M127.6 147.3h1.25M162.7 147.0h1.25M245.7 147.7h1.25M246.4 147.7h1.25M125.1 148.2h1.25M138.8 148.3h1.25M148.1 148.3h1.25M160.2 148.5h1.25M178.4 148.7h1.25M204.8 148.8h1.25M206.1 148.2h1.25M243.4 148.1h1.25M200.0 149.5h1.25M100.3 150.7h1.25M207.1 150.6h1.25M295.6 151.1h1.25M198.8 151.7h1.25M243.4 152.1h1.25M100.4 153.1h1.25M140.9 152.8h1.25M145.0 153.0h1.25M187.0 152.5h1.25M194.9 153.3h1.25M196.1 152.6h1.25M196.9 152.7h1.25M198.1 153.3h1.25M199.3 152.9h1.25M199.9 153.2h1.25M207.7 153.1h1.25M209.2 152.9h1.25M91.0 153.9h1.25M140.1 153.8h1.25M187.9 154.1h1.25M188.9 153.7h1.25M194.5 154.4h1.25M197.9 153.7h1.25M200.2 154.0h1.25M203.6 153.8h1.25M205.5 154.3h1.25M212.5 154.1h1.25M98.9 154.8h1.25M140.6 155.0h1.25M143.3 155.4h1.25M145.2 154.8h1.25M147.1 155.0h1.25M148.7 155.2h1.25M161.8 155.3h1.25M184.9 154.9h1.25M190.0 155.2h1.25M191.6 154.9h1.25M194.7 154.7h1.25M199.1 154.8h1.25M202.1 154.8h1.25M212.3 155.1h1.25M214.8 154.8h1.25M241.9 155.2h1.25M93.2 156.5h1.25M100.3 155.9h1.25M163.8 156.1h1.25M184.8 156.2h1.25M202.4 156.2h1.25M206.6 156.4h1.25M217.9 155.9h1.25M220.3 156.1h1.25M221.4 156.4h1.25M225.6 156.2h1.25M241.0 155.8h1.25M289.5 156.1h1.25M101.4 157.3h1.25M135.2 157.3h1.25M138.3 157.2h1.25M146.0 157.0h1.25M148.6 157.3h1.25M153.7 157.1h1.25M160.8 157.2h1.25M163.6 157.2h1.25M165.0 157.2h1.25M184.0 157.2h1.25M187.8 157.6h1.25M191.6 157.2h1.25M192.5 157.7h1.25M198.8 157.7h1.25M201.5 157.0h1.25M202.2 157.1h1.25M203.6 157.0h1.25M204.7 157.6h1.25M205.9 157.2h1.25M209.2 157.1h1.25M217.4 157.3h1.25M222.0 157.3h1.25M223.0 157.6h1.25M224.5 157.3h1.25M226.6 157.4h1.25M229.1 157.2h1.25M137.2 158.5h1.25M153.3 158.2h1.25M159.5 158.2h1.25M161.7 158.4h1.25M162.8 158.1h1.25M163.8 158.6h1.25M165.4 158.8h1.25M184.8 158.5h1.25M186.0 158.5h1.25M186.7 158.4h1.25M189.9 158.1h1.25M192.8 158.6h1.25M193.7 158.6h1.25M196.5 158.1h1.25M200.4 158.2h1.25M201.3 158.3h1.25M206.8 158.2h1.25M216.7 158.6h1.25M217.6 158.5h1.25M218.9 158.2h1.25M223.2 158.6h1.25M230.9 158.7h1.25M235.3 158.1h1.25M236.7 158.3h1.25M238.6 158.2h1.25M282.9 158.4h1.25M304.5 158.7h1.25M89.4 159.4h1.25M104.2 159.7h1.25M119.7 159.2h1.25M142.2 159.7h1.25M159.6 159.3h1.25M161.0 159.5h1.25M164.7 159.2h1.25M183.9 159.5h1.25M189.3 159.4h1.25M190.4 159.4h1.25M191.7 159.6h1.25M193.9 159.3h1.25M204.7 159.2h1.25M206.6 159.2h1.25M214.6 159.6h1.25M219.7 159.5h1.25M222.2 159.2h1.25M223.1 159.8h1.25M281.5 159.5h1.25M295.9 159.5h1.25M87.2 160.6h1.25M99.9 160.4h1.25M144.3 161.0h1.25M146.4 160.8h1.25M150.9 160.8h1.25M159.2 160.8h1.25M161.9 160.2h1.25M163.0 160.8h1.25M164.0 161.0h1.25M183.3 160.3h1.25M186.8 160.7h1.25M188.3 160.6h1.25M189.0 160.3h1.25M196.2 160.7h1.25M199.4 160.6h1.25M211.2 161.0h1.25M214.4 160.7h1.25M216.7 160.7h1.25M218.1 160.4h1.25M230.0 160.8h1.25M232.0 160.3h1.25M291.2 160.4h1.25M293.7 160.3h1.25M96.9 161.8h1.25M159.4 161.6h1.25M160.4 161.9h1.25M161.7 161.6h1.25M162.8 161.6h1.25M163.8 161.5h1.25M165.0 161.7h1.25M186.3 161.9h1.25M188.2 161.9h1.25M190.5 162.1h1.25M191.5 161.6h1.25M194.5 161.9h1.25M196.2 161.6h1.25M196.5 161.6h1.25M211.6 161.4h1.25M212.2 161.9h1.25M213.2 161.8h1.25M214.5 161.4h1.25M215.9 161.8h1.25M217.9 161.7h1.25M219.3 161.8h1.25M228.6 162.0h1.25M234.0 161.9h1.25M294.6 161.7h1.25M297.7 162.0h1.25M130.7 163.0h1.25M147.4 162.7h1.25M159.3 163.1h1.25M161.9 162.4h1.25M162.5 163.1h1.25M187.9 162.9h1.25M213.4 162.8h1.25M217.6 163.1h1.25M219.0 163.0h1.25M225.8 163.2h1.25M229.7 163.1h1.25M294.1 162.5h1.25M295.5 162.5h1.25M95.8 163.6h1.25M144.5 163.8h1.25M151.9 164.0h1.25M162.0 164.1h1.25M162.4 163.5h1.25M190.2 163.7h1.25M196.1 163.5h1.25M196.8 164.2h1.25M198.2 163.6h1.25M209.3 164.1h1.25M213.0 163.5h1.25M216.7 163.9h1.25M219.1 163.6h1.25M224.7 164.0h1.25M227.3 163.5h1.25M230.2 164.0h1.25M235.0 163.6h1.25M238.5 163.6h1.25M297.1 163.9h1.25M299.2 163.5h1.25M145.5 165.1h1.25M149.6 165.4h1.25M162.9 165.4h1.25M164.0 165.3h1.25M186.2 165.1h1.25M190.0 164.9h1.25M194.8 164.8h1.25M196.1 165.4h1.25M196.8 165.2h1.25M198.3 164.8h1.25M210.3 165.3h1.25M213.5 164.7h1.25M224.7 165.1h1.25M233.2 164.7h1.25M289.4 165.2h1.25M291.5 165.1h1.25M292.7 165.4h1.25M293.9 165.1h1.25M143.1 166.1h1.25M144.8 165.8h1.25M147.5 166.5h1.25M170.3 165.7h1.25M186.0 165.7h1.25M191.3 165.8h1.25M192.2 165.7h1.25M193.6 166.4h1.25M194.5 165.7h1.25M195.8 165.9h1.25M198.3 166.5h1.25M199.0 166.3h1.25M200.4 165.7h1.25M201.0 166.1h1.25M202.7 165.9h1.25M212.6 166.1h1.25M216.9 166.2h1.25M225.8 166.3h1.25M226.9 166.0h1.25M288.5 166.0h1.25M290.2 165.9h1.25M293.8 166.3h1.25M303.6 166.2h1.25M307.6 166.0h1.25M145.6 167.1h1.25M155.3 166.9h1.25M169.5 167.2h1.25M170.6 166.9h1.25M172.6 167.2h1.25M179.5 167.3h1.25M183.3 166.9h1.25M188.2 167.0h1.25M191.3 167.5h1.25M196.0 167.3h1.25M198.0 167.0h1.25M209.8 167.5h1.25M210.9 167.4h1.25M213.1 167.0h1.25M221.8 166.9h1.25M225.2 167.3h1.25M235.2 167.1h1.25M236.7 167.0h1.25M237.5 167.2h1.25M247.3 167.4h1.25M259.7 167.6h1.25M292.8 166.9h1.25M293.7 167.5h1.25M294.6 167.5h1.25M302.5 166.8h1.25M94.4 168.2h1.25M168.1 168.5h1.25M171.5 168.3h1.25M176.1 168.2h1.25M191.6 168.6h1.25M192.7 168.4h1.25M193.6 168.4h1.25M196.0 168.4h1.25M198.3 167.9h1.25M200.3 168.0h1.25M204.8 168.6h1.25M206.6 168.0h1.25M208.1 167.9h1.25M210.0 168.0h1.25M214.4 168.4h1.25M219.7 168.1h1.25M223.1 168.5h1.25M224.2 168.0h1.25M233.0 168.3h1.25M236.9 168.7h1.25M239.0 168.6h1.25M239.9 168.0h1.25M263.6 168.5h1.25M266.5 168.7h1.25M281.7 168.4h1.25M288.5 168.5h1.25M291.5 168.1h1.25M294.4 168.2h1.25M295.7 168.1h1.25M98.1 169.7h1.25M145.4 169.5h1.25M147.3 169.1h1.25M150.3 169.5h1.25M153.0 169.5h1.25M155.5 169.7h1.25M170.5 169.0h1.25M171.7 169.7h1.25M175.9 169.0h1.25M177.2 169.8h1.25M178.5 169.6h1.25M189.5 169.2h1.25M190.3 169.2h1.25M192.8 169.6h1.25M193.7 169.7h1.25M194.3 169.1h1.25M200.5 169.8h1.25M201.0 169.5h1.25M202.5 169.1h1.25M203.5 169.2h1.25M204.5 169.1h1.25M209.1 169.3h1.25M210.4 169.8h1.25M211.5 169.2h1.25M215.8 169.0h1.25M219.7 169.6h1.25M221.0 169.6h1.25M223.1 169.7h1.25M225.1 169.8h1.25M230.7 169.0h1.25M237.2 169.5h1.25M242.1 169.7h1.25M244.0 169.1h1.25M265.4 169.7h1.25M265.8 169.3h1.25M289.2 169.2h1.25M292.6 169.0h1.25M295.0 169.2h1.25M295.7 169.3h1.25M143.7 170.5h1.25M150.9 170.9h1.25M151.6 170.3h1.25M155.9 170.8h1.25M168.6 170.4h1.25M170.2 170.7h1.25M172.4 170.7h1.25M178.3 170.7h1.25M181.5 170.1h1.25M184.0 170.8h1.25M188.4 170.9h1.25M190.4 170.2h1.25M192.6 170.2h1.25M193.3 170.4h1.25M203.8 170.6h1.25M204.6 170.2h1.25M206.0 170.6h1.25M210.0 170.8h1.25M212.3 170.4h1.25M214.1 170.7h1.25M216.5 170.6h1.25M220.3 170.6h1.25M221.0 170.9h1.25M226.3 170.1h1.25M227.5 170.2h1.25M233.1 170.8h1.25M234.6 170.9h1.25M235.7 170.6h1.25M236.4 170.4h1.25M237.4 170.6h1.25M239.7 170.4h1.25M240.9 170.5h1.25M242.0 170.6h1.25M258.5 170.8h1.25M259.4 170.6h1.25M261.8 170.2h1.25M264.8 170.3h1.25M287.1 170.2h1.25M289.4 170.6h1.25M293.8 170.3h1.25M295.0 170.3h1.25M299.3 170.9h1.25M149.6 171.8h1.25M152.8 171.5h1.25M156.4 171.3h1.25M157.7 171.6h1.25M166.8 171.7h1.25M170.6 171.8h1.25M171.8 171.7h1.25M172.7 171.7h1.25M173.5 171.7h1.25M184.1 171.3h1.25M184.4 172.0h1.25M189.5 171.3h1.25M190.3 171.6h1.25M191.5 171.5h1.25M192.6 171.4h1.25M202.3 171.4h1.25M203.4 171.7h1.25M204.9 171.4h1.25M205.7 171.5h1.25M206.8 171.6h1.25M212.0 171.6h1.25M216.0 171.7h1.25M216.8 171.9h1.25M219.8 171.6h1.25M226.4 171.3h1.25M230.1 171.4h1.25M231.1 171.8h1.25M232.0 172.0h1.25M238.4 171.7h1.25M241.1 171.9h1.25M251.9 171.4h1.25M256.2 171.9h1.25M258.5 171.8h1.25M261.7 171.3h1.25M266.5 171.8h1.25M270.6 171.5h1.25M286.2 171.2h1.25M287.1 171.3h1.25M291.3 171.5h1.25M294.9 171.5h1.25M295.8 171.8h1.25M300.0 171.6h1.25M306.7 172.0h1.25M97.0 172.4h1.25M100.8 173.0h1.25M104.4 172.3h1.25M106.8 172.3h1.25M125.1 172.5h1.25M144.3 172.5h1.25M145.4 172.8h1.25M150.4 172.4h1.25M157.3 172.8h1.25M158.5 172.8h1.25M166.4 173.1h1.25M168.5 172.9h1.25M169.2 172.4h1.25M170.3 172.8h1.25M171.7 172.6h1.25M173.6 172.9h1.25M175.9 172.8h1.25M180.5 172.6h1.25M186.8 172.3h1.25M187.8 172.5h1.25M189.3 173.0h1.25M191.3 172.7h1.25M199.2 172.3h1.25M200.2 172.5h1.25M202.5 173.0h1.25M203.3 172.7h1.25M204.5 172.8h1.25M206.8 172.9h1.25M208.2 172.8h1.25M208.8 173.0h1.25M210.4 172.5h1.25M211.3 172.4h1.25M212.0 172.6h1.25M214.4 172.4h1.25M217.1 173.0h1.25M218.1 173.0h1.25M224.3 172.7h1.25M225.6 172.4h1.25M226.4 172.8h1.25M229.7 173.1h1.25M230.8 172.7h1.25M233.4 172.7h1.25M241.1 172.7h1.25M241.9 172.3h1.25M259.3 173.0h1.25M279.8 172.7h1.25M289.4 172.7h1.25M298.3 172.7h1.25M300.5 172.7h1.25M140.4 174.2h1.25M146.3 174.2h1.25M149.7 173.5h1.25M156.3 173.7h1.25M160.2 173.6h1.25M165.8 173.8h1.25M167.3 174.0h1.25M168.7 173.7h1.25M169.6 173.4h1.25M171.4 173.8h1.25M173.0 173.8h1.25M173.5 173.9h1.25M175.0 173.8h1.25M180.5 174.1h1.25M188.1 174.0h1.25M189.0 173.5h1.25M192.7 173.5h1.25M199.9 173.7h1.25M200.9 173.5h1.25M203.8 174.2h1.25M204.7 173.5h1.25M205.8 174.1h1.25M206.8 174.2h1.25M207.9 173.9h1.25M210.4 174.1h1.25M210.8 173.9h1.25M212.7 173.8h1.25M222.1 173.4h1.25M223.5 174.1h1.25M227.3 173.9h1.25M228.8 173.5h1.25M233.3 173.6h1.25M234.1 173.9h1.25M235.6 173.8h1.25M239.7 174.1h1.25M241.6 173.5h1.25M242.9 173.4h1.25M244.1 174.0h1.25M245.7 173.5h1.25M246.5 173.4h1.25M249.4 173.5h1.25M282.6 173.6h1.25M285.7 174.1h1.25M296.0 173.9h1.25M300.2 173.5h1.25M302.4 173.9h1.25M104.2 174.8h1.25M115.5 174.5h1.25M116.3 174.6h1.25M140.8 174.7h1.25M149.9 174.7h1.25M150.4 174.9h1.25M151.5 174.6h1.25M168.5 175.2h1.25M169.7 174.7h1.25M170.6 175.0h1.25M171.6 174.7h1.25M172.4 174.5h1.25M173.5 175.2h1.25M174.6 175.3h1.25M181.1 174.9h1.25M182.4 175.2h1.25M186.9 174.6h1.25M187.9 174.9h1.25M190.4 175.2h1.25M191.6 175.1h1.25M192.8 175.0h1.25M193.6 174.9h1.25M198.8 175.1h1.25M201.4 174.9h1.25M203.9 175.2h1.25M204.9 175.0h1.25M206.6 175.2h1.25M208.8 174.9h1.25M210.3 175.0h1.25M211.5 174.6h1.25M212.1 175.0h1.25M219.8 174.7h1.25M222.3 175.1h1.25M224.1 174.7h1.25M230.2 175.1h1.25M230.9 174.9h1.25M234.3 175.1h1.25M243.2 175.2h1.25M245.3 174.7h1.25M246.3 174.5h1.25M247.2 174.7h1.25M248.2 175.1h1.25M253.0 174.9h1.25M260.5 174.7h1.25M263.2 174.9h1.25M281.6 175.0h1.25M288.2 174.7h1.25M290.3 174.7h1.25M291.1 174.7h1.25M296.7 175.2h1.25M94.5 176.0h1.25M150.3 175.9h1.25M170.9 176.2h1.25M172.6 176.4h1.25M174.9 176.0h1.25M179.1 176.4h1.25M181.8 175.8h1.25M182.6 176.0h1.25M186.6 176.4h1.25M192.4 176.0h1.25M200.1 176.3h1.25M204.9 176.2h1.25M207.8 176.0h1.25M208.7 176.2h1.25M210.1 176.4h1.25M212.1 176.0h1.25M219.3 176.3h1.25M220.4 176.2h1.25M223.1 175.7h1.25M224.3 176.4h1.25M227.7 175.9h1.25M228.4 175.8h1.25M238.4 175.7h1.25M241.9 176.4h1.25M245.4 176.1h1.25M247.2 175.9h1.25M254.3 176.1h1.25M258.1 175.9h1.25M259.5 175.8h1.25M263.0 176.2h1.25M278.7 176.2h1.25M281.8 175.8h1.25M291.2 175.7h1.25M294.5 176.4h1.25M118.9 177.5h1.25M147.7 177.0h1.25M148.8 177.4h1.25M149.8 177.3h1.25M150.6 177.2h1.25M170.8 177.0h1.25M172.3 177.0h1.25M173.6 177.2h1.25M175.8 177.0h1.25M178.4 177.5h1.25M181.5 177.3h1.25M182.6 177.2h1.25M186.7 177.2h1.25M190.5 177.1h1.25M192.8 177.0h1.25M200.1 177.0h1.25M201.6 176.9h1.25M202.3 177.3h1.25M204.6 177.1h1.25M205.6 177.1h1.25M210.4 177.5h1.25M212.7 177.1h1.25M223.3 177.5h1.25M226.6 177.1h1.25M237.7 176.9h1.25M241.0 177.2h1.25M245.6 177.4h1.25M247.2 177.1h1.25M248.6 177.5h1.25M253.2 177.0h1.25M258.5 177.2h1.25M271.5 177.2h1.25M282.8 177.2h1.25M283.7 177.0h1.25M288.0 177.3h1.25M291.8 176.8h1.25M299.0 176.8h1.25M103.4 178.2h1.25M115.6 178.4h1.25M147.8 178.0h1.25M152.9 178.6h1.25M168.6 177.9h1.25M170.9 178.2h1.25M172.3 178.0h1.25M174.8 178.2h1.25M175.8 178.2h1.25M176.8 178.2h1.25M178.3 178.4h1.25M181.3 178.1h1.25M182.4 178.5h1.25M184.7 177.9h1.25M186.1 178.5h1.25M186.7 178.2h1.25M204.2 178.3h1.25M211.3 178.2h1.25M224.0 178.3h1.25M227.9 178.2h1.25M232.2 178.0h1.25M239.9 177.9h1.25M246.2 178.2h1.25M247.8 178.0h1.25M248.7 178.5h1.25M251.8 178.6h1.25M253.0 178.4h1.25M256.2 177.8h1.25M263.2 178.4h1.25M266.5 177.9h1.25M272.8 178.0h1.25M280.5 177.8h1.25M285.6 178.5h1.25M295.0 177.8h1.25M115.3 179.4h1.25M146.5 179.0h1.25M155.2 179.2h1.25M168.4 178.9h1.25M170.6 179.3h1.25M171.4 179.0h1.25M172.8 179.5h1.25M175.0 179.2h1.25M182.5 179.2h1.25M186.7 179.4h1.25M204.5 179.2h1.25M206.7 179.6h1.25M208.1 179.5h1.25M216.3 179.2h1.25M221.0 179.2h1.25M222.5 179.7h1.25M223.4 179.0h1.25M226.9 179.0h1.25M228.6 179.5h1.25M245.6 179.0h1.25M247.8 179.7h1.25M255.2 179.0h1.25M256.6 179.4h1.25M259.6 179.6h1.25M262.7 179.4h1.25M270.2 179.3h1.25M290.5 179.1h1.25M293.7 179.3h1.25M295.0 179.6h1.25M296.3 179.5h1.25M298.3 179.1h1.25M134.5 180.2h1.25M139.5 180.6h1.25M157.3 180.5h1.25M166.0 180.1h1.25M166.9 180.3h1.25M169.2 180.1h1.25M172.6 180.2h1.25M175.0 180.2h1.25M181.4 180.5h1.25M182.9 180.0h1.25M183.8 180.2h1.25M184.8 180.1h1.25M185.5 180.5h1.25M213.5 180.8h1.25M217.6 180.8h1.25M219.1 180.2h1.25M229.6 180.3h1.25M245.4 180.1h1.25M246.6 180.5h1.25M247.9 180.7h1.25M248.5 180.0h1.25M249.4 180.0h1.25M252.9 180.2h1.25M257.4 180.3h1.25M258.3 180.6h1.25M265.2 180.6h1.25M267.5 180.3h1.25M269.5 180.5h1.25M287.3 180.5h1.25M288.2 180.3h1.25M289.1 180.7h1.25M290.3 180.7h1.25M295.6 180.5h1.25M302.4 180.4h1.25M166.3 181.1h1.25M166.9 181.8h1.25M169.2 181.9h1.25M170.1 181.1h1.25M171.6 181.5h1.25M173.0 181.2h1.25M176.8 181.2h1.25M179.7 181.1h1.25M180.0 181.3h1.25M181.5 181.7h1.25M182.8 181.2h1.25M183.5 181.5h1.25M185.5 181.6h1.25M197.2 181.8h1.25M211.0 181.8h1.25M214.8 181.4h1.25M217.1 181.5h1.25M219.2 181.8h1.25M220.1 181.1h1.25M221.2 181.9h1.25M222.1 181.2h1.25M224.7 181.5h1.25M228.6 181.5h1.25M229.7 181.3h1.25M245.1 181.4h1.25M246.7 181.1h1.25M247.5 181.8h1.25M249.8 181.4h1.25M251.2 181.5h1.25M252.0 181.3h1.25M260.5 181.5h1.25M263.2 181.7h1.25M263.7 181.7h1.25M265.8 181.6h1.25M268.6 181.5h1.25M269.2 181.5h1.25M270.3 181.5h1.25M274.7 181.7h1.25M287.4 181.9h1.25M289.4 181.5h1.25M291.6 181.4h1.25M292.6 181.4h1.25M295.0 181.8h1.25M165.8 182.6h1.25M170.3 182.8h1.25M171.4 182.4h1.25M172.8 182.8h1.25M173.9 182.4h1.25M175.2 182.2h1.25M182.9 182.7h1.25M184.5 182.8h1.25M186.0 182.7h1.25M195.9 182.5h1.25M207.0 182.6h1.25M207.8 182.6h1.25M210.0 182.8h1.25M214.3 182.4h1.25M216.8 182.8h1.25M219.1 182.9h1.25M219.9 183.0h1.25M226.9 182.9h1.25M230.1 182.9h1.25M230.9 182.8h1.25M232.9 182.7h1.25M245.4 183.0h1.25M247.2 182.7h1.25M248.9 182.2h1.25M250.8 182.8h1.25M255.4 182.7h1.25M258.5 182.6h1.25M264.1 182.8h1.25M266.6 182.6h1.25M267.7 182.2h1.25M268.1 182.6h1.25M269.2 182.7h1.25M270.5 182.6h1.25M271.4 182.4h1.25M287.2 182.6h1.25M288.5 182.8h1.25M295.1 182.3h1.25M297.3 182.4h1.25M139.8 183.9h1.25M145.5 183.4h1.25M150.3 183.7h1.25M162.4 183.5h1.25M165.4 183.6h1.25M167.4 183.3h1.25M168.1 183.5h1.25M175.7 183.6h1.25M177.4 183.7h1.25M177.9 184.0h1.25M180.4 183.5h1.25M182.2 183.4h1.25M183.7 183.7h1.25M187.1 183.5h1.25M206.8 183.6h1.25M210.2 183.3h1.25M214.2 184.0h1.25M219.0 183.3h1.25M221.3 183.5h1.25M221.9 183.8h1.25M224.0 183.8h1.25M226.2 183.4h1.25M231.0 183.7h1.25M231.8 183.3h1.25M233.1 183.9h1.25M235.2 183.7h1.25M241.6 183.6h1.25M244.0 183.9h1.25M245.6 183.3h1.25M246.6 183.9h1.25M247.2 183.8h1.25M249.6 183.8h1.25M253.8 183.6h1.25M255.1 184.0h1.25M256.3 184.0h1.25M257.0 183.8h1.25M269.2 183.5h1.25M270.3 184.0h1.25M271.5 183.9h1.25M272.7 183.3h1.25M274.2 183.7h1.25M290.7 183.5h1.25M291.7 184.0h1.25M164.9 184.9h1.25M168.1 184.8h1.25M169.2 185.1h1.25M175.0 185.0h1.25M177.2 185.0h1.25M179.4 184.9h1.25M183.6 185.0h1.25M191.1 184.7h1.25M194.9 184.7h1.25M204.5 184.4h1.25M210.9 185.2h1.25M212.0 184.4h1.25M218.6 185.0h1.25M220.4 184.6h1.25M229.5 185.2h1.25M231.0 184.7h1.25M233.5 184.7h1.25M234.7 184.6h1.25M235.8 184.6h1.25M243.1 184.9h1.25M245.3 184.6h1.25M246.2 184.8h1.25M249.9 184.7h1.25M251.6 184.6h1.25M257.4 184.8h1.25M260.4 184.4h1.25M261.7 185.0h1.25M262.7 184.5h1.25M270.4 185.1h1.25M271.5 184.7h1.25M272.7 184.7h1.25M273.5 184.7h1.25M275.1 184.7h1.25M289.2 184.5h1.25M52.6 186.1h1.25M166.9 186.1h1.25M170.8 185.8h1.25M171.6 186.1h1.25M173.9 186.1h1.25M178.3 185.8h1.25M179.5 186.2h1.25M181.2 185.5h1.25M186.7 185.8h1.25M198.9 185.6h1.25M199.9 186.1h1.25M203.4 186.0h1.25M204.8 185.9h1.25M211.6 185.5h1.25M214.4 185.6h1.25M215.8 186.3h1.25M216.8 185.7h1.25M217.5 186.2h1.25M223.2 185.8h1.25M224.3 185.6h1.25M228.7 185.6h1.25M229.7 185.7h1.25M230.8 185.8h1.25M232.4 186.0h1.25M234.6 186.2h1.25M235.0 186.1h1.25M237.4 186.2h1.25M243.9 186.2h1.25M251.9 185.6h1.25M252.8 185.5h1.25M254.2 186.1h1.25M255.5 186.0h1.25M262.9 186.2h1.25M264.2 186.0h1.25M268.4 185.8h1.25M269.7 186.2h1.25M270.3 186.0h1.25M272.5 186.3h1.25M275.3 185.8h1.25M278.2 185.8h1.25M283.1 185.6h1.25M291.7 186.1h1.25M149.6 187.3h1.25M154.1 186.9h1.25M166.1 186.8h1.25M166.9 186.9h1.25M169.3 187.2h1.25M171.4 187.1h1.25M172.9 187.3h1.25M175.0 187.2h1.25M177.4 187.2h1.25M178.2 187.2h1.25M179.0 187.4h1.25M186.7 186.6h1.25M199.2 187.1h1.25M200.6 187.1h1.25M201.0 187.0h1.25M203.3 187.2h1.25M204.8 186.8h1.25M207.9 186.7h1.25M212.1 187.1h1.25M213.1 187.3h1.25M215.3 186.9h1.25M216.8 186.7h1.25M222.4 187.0h1.25M223.6 186.9h1.25M224.5 187.2h1.25M230.7 186.8h1.25M234.3 187.4h1.25M236.3 186.9h1.25M239.5 187.3h1.25M241.7 187.0h1.25M250.4 186.7h1.25M254.0 186.9h1.25M255.3 187.4h1.25M256.4 187.3h1.25M263.0 187.1h1.25M271.7 186.7h1.25M274.1 187.4h1.25M277.2 187.0h1.25M92.1 188.2h1.25M97.6 188.1h1.25M167.3 188.0h1.25M169.6 188.0h1.25M170.8 188.4h1.25M172.5 187.9h1.25M174.0 188.2h1.25M174.8 188.2h1.25M175.6 188.1h1.25M177.1 188.4h1.25M178.0 187.8h1.25M184.9 188.2h1.25M188.0 187.8h1.25M193.5 187.7h1.25M198.2 187.9h1.25M198.7 187.8h1.25M200.0 188.2h1.25M201.5 188.1h1.25M202.3 187.8h1.25M203.5 188.3h1.25M221.5 188.0h1.25M221.8 188.1h1.25M223.0 188.3h1.25M225.8 188.4h1.25M228.8 188.0h1.25M232.9 187.8h1.25M236.8 188.0h1.25M239.1 187.7h1.25M239.7 188.1h1.25M240.7 188.4h1.25M242.0 188.4h1.25M254.4 187.9h1.25M255.1 188.5h1.25M259.5 187.7h1.25M260.8 187.9h1.25M267.5 188.0h1.25M268.3 188.1h1.25M272.8 187.8h1.25M277.0 187.9h1.25M293.4 188.1h1.25M161.3 189.5h1.25M168.6 188.8h1.25M170.5 189.2h1.25M171.3 189.0h1.25M172.6 189.3h1.25M174.2 189.0h1.25M175.8 189.1h1.25M176.8 189.2h1.25M178.2 189.4h1.25M180.4 189.4h1.25M182.8 189.5h1.25M185.2 189.1h1.25M185.7 189.4h1.25M187.4 189.3h1.25M192.2 189.5h1.25M193.6 189.0h1.25M198.3 189.4h1.25M199.2 189.0h1.25M200.3 189.0h1.25M201.0 189.3h1.25M202.2 189.4h1.25M203.3 188.8h1.25M205.0 188.9h1.25M206.7 188.8h1.25M209.2 188.9h1.25M214.5 189.4h1.25M215.6 189.4h1.25M218.7 189.1h1.25M220.1 189.0h1.25M220.9 189.6h1.25M223.5 188.9h1.25M225.7 189.5h1.25M234.0 188.9h1.25M236.3 189.4h1.25M239.7 189.0h1.25M241.7 189.4h1.25M245.7 189.1h1.25M253.3 189.4h1.25M268.4 189.3h1.25M274.8 188.9h1.25M275.7 189.0h1.25M289.6 189.3h1.25M97.0 190.7h1.25M163.8 190.0h1.25M165.2 190.2h1.25M169.7 190.1h1.25M172.6 190.7h1.25M173.5 190.0h1.25M175.0 189.9h1.25M175.7 190.0h1.25M177.4 190.0h1.25M178.6 190.7h1.25M180.6 190.6h1.25M181.6 190.6h1.25M184.0 190.6h1.25M185.6 190.2h1.25M186.6 190.1h1.25M188.5 190.3h1.25M191.1 190.3h1.25M192.3 190.4h1.25M193.6 190.2h1.25M195.5 190.1h1.25M199.1 190.1h1.25M200.5 190.2h1.25M201.6 190.6h1.25M205.4 190.5h1.25M206.5 190.4h1.25M208.0 190.6h1.25M208.7 190.0h1.25M215.4 190.6h1.25M220.4 190.4h1.25M220.9 190.5h1.25M222.3 189.9h1.25M223.3 190.6h1.25M229.8 190.1h1.25M234.3 190.7h1.25M235.2 190.3h1.25M238.6 190.5h1.25M240.0 190.7h1.25M244.3 190.1h1.25M251.2 190.0h1.25M255.4 190.6h1.25M257.4 190.1h1.25M258.8 190.5h1.25M263.0 190.3h1.25M264.2 190.3h1.25M266.3 190.6h1.25M279.0 190.1h1.25M147.1 191.3h1.25M153.7 191.2h1.25M174.0 191.0h1.25M174.8 191.3h1.25M175.9 191.6h1.25M177.2 191.5h1.25M188.1 191.4h1.25M192.6 191.2h1.25M196.0 191.7h1.25M199.1 191.1h1.25M201.3 191.2h1.25M204.7 191.5h1.25M220.9 191.4h1.25M222.5 191.4h1.25M224.6 191.4h1.25M231.4 191.2h1.25M231.9 191.6h1.25M234.3 191.6h1.25M235.4 191.1h1.25M236.9 191.1h1.25M238.3 191.1h1.25M242.0 191.2h1.25M250.7 191.5h1.25M253.7 191.4h1.25M257.6 191.0h1.25M258.3 191.5h1.25M259.8 191.3h1.25M261.9 191.4h1.25M262.5 191.1h1.25M265.2 191.3h1.25M98.3 192.5h1.25M102.0 192.4h1.25M153.0 192.2h1.25M172.9 192.1h1.25M175.3 192.3h1.25M176.2 192.1h1.25M180.5 192.1h1.25M181.5 192.8h1.25M188.2 192.4h1.25M192.5 192.5h1.25M193.5 192.4h1.25M194.8 192.5h1.25M199.1 192.7h1.25M200.1 192.9h1.25M201.1 192.8h1.25M202.0 192.7h1.25M205.8 192.3h1.25M208.7 192.9h1.25M218.6 192.6h1.25M221.5 192.8h1.25M221.9 192.2h1.25M235.7 192.8h1.25M238.9 192.6h1.25M242.0 192.4h1.25M247.3 192.6h1.25M249.8 192.2h1.25M252.2 192.3h1.25M254.5 192.6h1.25M259.5 192.7h1.25M260.8 192.6h1.25M262.2 192.5h1.25M265.1 192.1h1.25M265.8 192.2h1.25M280.7 192.3h1.25M99.7 193.8h1.25M101.9 194.0h1.25M146.0 193.2h1.25M160.9 193.3h1.25M171.7 193.6h1.25M173.0 193.8h1.25M174.0 193.4h1.25M174.9 193.2h1.25M177.5 193.5h1.25M180.7 193.6h1.25M182.7 193.4h1.25M191.6 193.3h1.25M194.7 193.9h1.25M199.9 193.8h1.25M201.4 193.3h1.25M203.4 193.4h1.25M204.7 193.8h1.25M205.8 193.9h1.25M207.6 193.4h1.25M210.3 193.6h1.25M220.2 193.4h1.25M221.3 193.7h1.25M230.8 193.6h1.25M234.6 193.9h1.25M235.7 193.4h1.25M237.8 193.9h1.25M246.7 193.5h1.25M247.8 193.8h1.25M251.0 193.3h1.25M251.9 193.7h1.25M261.6 193.3h1.25M268.7 193.8h1.25M277.6 193.5h1.25M278.3 193.3h1.25M280.3 193.4h1.25M283.0 193.7h1.25M98.0 194.7h1.25M99.1 195.1h1.25M101.5 194.3h1.25M104.8 194.7h1.25M118.0 194.9h1.25M148.1 194.4h1.25M149.7 195.1h1.25M154.2 194.7h1.25M157.5 194.6h1.25M168.0 194.9h1.25M172.9 195.1h1.25M173.4 194.4h1.25M175.8 195.1h1.25M187.9 194.7h1.25M199.0 194.4h1.25M200.0 194.4h1.25M203.5 195.0h1.25M204.7 194.3h1.25M205.4 194.7h1.25M210.9 194.9h1.25M214.4 194.7h1.25M215.7 194.3h1.25M219.2 194.6h1.25M219.8 194.7h1.25M222.1 194.4h1.25M223.7 194.5h1.25M224.7 194.4h1.25M230.0 195.0h1.25M233.2 194.3h1.25M233.9 195.1h1.25M236.8 194.8h1.25M239.5 194.8h1.25M247.1 195.0h1.25M250.1 194.8h1.25M250.7 194.6h1.25M252.7 195.0h1.25M255.0 194.4h1.25M257.2 194.4h1.25M265.3 194.6h1.25M269.5 194.4h1.25M271.5 194.6h1.25M277.0 194.6h1.25M92.3 196.0h1.25M101.2 195.5h1.25M102.6 196.0h1.25M146.6 195.5h1.25M149.7 195.5h1.25M152.8 195.5h1.25M159.3 195.8h1.25M173.9 195.7h1.25M175.2 195.9h1.25M182.6 195.5h1.25M192.5 195.7h1.25M202.7 195.8h1.25M204.5 195.8h1.25M206.9 195.7h1.25M210.5 196.2h1.25M225.8 196.1h1.25M226.2 195.4h1.25M227.6 195.5h1.25M229.9 195.5h1.25M231.3 195.5h1.25M232.5 195.9h1.25M233.3 195.8h1.25M234.0 195.9h1.25M246.5 196.1h1.25M252.0 195.7h1.25M255.2 196.0h1.25M263.1 195.7h1.25M264.8 195.6h1.25M269.1 196.1h1.25M276.9 195.5h1.25M279.5 195.6h1.25M282.7 195.6h1.25M96.9 196.6h1.25M98.6 196.7h1.25M103.4 197.2h1.25M145.2 197.3h1.25M158.1 197.2h1.25M169.2 197.3h1.25M174.8 197.2h1.25M180.3 197.2h1.25M187.9 197.2h1.25M190.5 196.6h1.25M191.7 196.8h1.25M192.5 197.0h1.25M200.0 196.7h1.25M201.2 197.3h1.25M202.0 196.5h1.25M203.5 197.0h1.25M204.4 196.6h1.25M206.1 197.2h1.25M207.0 196.7h1.25M207.7 197.0h1.25M214.7 197.1h1.25M219.1 196.7h1.25M221.1 197.1h1.25M221.9 197.2h1.25M226.9 196.6h1.25M228.5 196.5h1.25M229.8 196.9h1.25M231.0 197.2h1.25M232.4 196.7h1.25M233.0 196.8h1.25M248.4 197.1h1.25M251.1 196.6h1.25M251.7 196.7h1.25M252.8 196.9h1.25M259.3 197.1h1.25M268.3 197.2h1.25M269.6 197.1h1.25M271.6 197.3h1.25M277.2 197.3h1.25M278.4 197.0h1.25M279.5 196.9h1.25M90.9 197.7h1.25M95.7 197.6h1.25M101.3 198.1h1.25M114.2 197.9h1.25M133.4 198.2h1.25M162.0 197.7h1.25M166.0 197.8h1.25M171.2 197.7h1.25M172.5 197.8h1.25M173.4 198.1h1.25M184.5 198.2h1.25M189.3 198.4h1.25M191.3 198.0h1.25M192.1 198.3h1.25M193.6 198.0h1.25M198.3 197.7h1.25M199.0 198.2h1.25M201.4 197.9h1.25M203.1 197.7h1.25M205.4 197.6h1.25M216.9 198.0h1.25M219.9 198.2h1.25M221.8 198.1h1.25M224.6 198.2h1.25M227.9 197.6h1.25M231.0 197.8h1.25M232.1 198.3h1.25M246.7 198.3h1.25M249.7 197.7h1.25M250.4 198.0h1.25M253.4 197.8h1.25M254.4 198.0h1.25M256.4 197.7h1.25M257.3 198.2h1.25M268.8 197.9h1.25M271.7 198.2h1.25M273.1 197.9h1.25M277.3 198.1h1.25M279.0 198.3h1.25M282.6 198.0h1.25M94.9 199.2h1.25M137.1 199.4h1.25M150.3 199.2h1.25M151.4 199.2h1.25M156.2 199.1h1.25M167.1 198.9h1.25M170.4 199.3h1.25M186.7 199.0h1.25M192.6 199.0h1.25M199.2 199.0h1.25M201.6 198.9h1.25M202.5 198.7h1.25M203.4 198.8h1.25M205.9 199.3h1.25M206.8 199.2h1.25M215.6 199.3h1.25M216.3 199.0h1.25M219.1 198.7h1.25M219.8 199.1h1.25M229.0 199.0h1.25M231.3 198.7h1.25M232.2 198.7h1.25M233.0 199.0h1.25M235.1 199.0h1.25M243.5 199.2h1.25M248.8 198.7h1.25M250.0 199.0h1.25M251.8 198.8h1.25M252.8 199.4h1.25M254.1 199.0h1.25M257.8 199.1h1.25M258.1 199.0h1.25M265.1 199.1h1.25M268.8 199.2h1.25M269.3 199.0h1.25M271.5 199.2h1.25M277.6 199.4h1.25M279.7 199.4h1.25M282.3 199.0h1.25M96.4 200.1h1.25M98.7 200.1h1.25M146.1 200.4h1.25M153.7 200.1h1.25M162.7 200.2h1.25M163.5 200.4h1.25M188.3 200.2h1.25M190.0 200.1h1.25M195.5 200.3h1.25M196.8 200.3h1.25M198.9 200.1h1.25M201.1 200.4h1.25M203.6 200.2h1.25M208.2 200.4h1.25M214.8 200.5h1.25M216.6 200.4h1.25M217.5 200.6h1.25M223.1 200.4h1.25M226.6 200.5h1.25M227.4 200.2h1.25M229.8 200.3h1.25M231.8 200.0h1.25M233.3 200.1h1.25M240.2 200.1h1.25M248.5 200.3h1.25M251.2 200.2h1.25M254.5 200.5h1.25M256.4 200.0h1.25M266.5 200.5h1.25M269.5 200.2h1.25M277.0 199.9h1.25M281.6 199.9h1.25M282.4 200.6h1.25M283.6 200.3h1.25M73.4 201.4h1.25M125.1 201.5h1.25M130.6 201.3h1.25M153.0 201.2h1.25M154.2 200.9h1.25M163.9 201.4h1.25M181.8 201.3h1.25M182.4 201.2h1.25M187.4 201.7h1.25M189.4 201.4h1.25M198.2 201.1h1.25M200.4 201.0h1.25M202.5 201.3h1.25M203.8 201.6h1.25M204.4 201.6h1.25M205.6 201.2h1.25M206.5 201.6h1.25M208.1 201.4h1.25M208.6 201.3h1.25M214.4 201.0h1.25M215.8 201.0h1.25M216.7 201.6h1.25M218.0 201.1h1.25M220.2 201.5h1.25M225.3 201.6h1.25M227.0 201.4h1.25M229.1 201.0h1.25M231.0 201.5h1.25M231.9 200.9h1.25M234.2 201.4h1.25M235.6 201.2h1.25M238.8 201.5h1.25M243.1 201.5h1.25M247.4 201.0h1.25M251.0 201.3h1.25M252.0 201.4h1.25M254.0 200.9h1.25M263.7 201.2h1.25M271.4 201.4h1.25M274.0 201.1h1.25M279.1 201.5h1.25M283.1 201.7h1.25M127.7 202.0h1.25M129.4 202.7h1.25M141.6 202.4h1.25M158.4 202.0h1.25M162.0 202.4h1.25M164.8 202.8h1.25M166.1 202.8h1.25M168.5 202.2h1.25M171.9 202.4h1.25M174.8 202.5h1.25M178.4 202.5h1.25M182.4 202.4h1.25M185.5 202.0h1.25M191.7 202.2h1.25M192.6 202.7h1.25M196.1 202.1h1.25M196.9 202.7h1.25M203.3 202.8h1.25M206.6 202.5h1.25M213.1 202.2h1.25M217.7 202.5h1.25M220.1 202.7h1.25M222.5 202.6h1.25M224.5 202.4h1.25M225.3 202.3h1.25M226.5 202.3h1.25M232.8 202.4h1.25M234.5 202.1h1.25M236.8 202.3h1.25M237.4 202.3h1.25M240.1 202.0h1.25M257.4 202.2h1.25M263.1 202.6h1.25M265.0 202.1h1.25M266.3 202.2h1.25M267.1 202.1h1.25M269.1 202.6h1.25M270.9 202.2h1.25M271.4 202.3h1.25M273.0 202.1h1.25M277.3 202.1h1.25M281.8 202.3h1.25M283.8 202.5h1.25M97.6 203.3h1.25M113.1 203.8h1.25M127.7 203.2h1.25M128.6 203.8h1.25M132.7 203.5h1.25M135.4 203.8h1.25M137.8 203.2h1.25M159.7 203.3h1.25M168.0 203.5h1.25M169.4 203.9h1.25M171.6 203.8h1.25M172.3 203.8h1.25M176.3 203.8h1.25M180.3 203.2h1.25M181.8 203.7h1.25M186.9 203.2h1.25M189.2 203.4h1.25M190.3 203.5h1.25M199.9 203.3h1.25M203.7 203.6h1.25M204.5 203.4h1.25M209.7 203.1h1.25M214.5 203.2h1.25M215.5 203.5h1.25M216.9 203.1h1.25M218.1 203.7h1.25M218.7 203.8h1.25M221.2 203.3h1.25M223.1 203.8h1.25M224.5 203.7h1.25M225.6 203.2h1.25M228.1 203.8h1.25M229.1 203.3h1.25M233.6 203.4h1.25M238.9 203.5h1.25M240.9 203.8h1.25M244.9 203.4h1.25M253.7 203.5h1.25M255.4 203.7h1.25M257.5 203.3h1.25M260.0 203.4h1.25M263.2 203.5h1.25M268.6 203.3h1.25M269.9 203.2h1.25M270.2 203.2h1.25M278.6 203.3h1.25M281.4 203.3h1.25M98.1 204.7h1.25M119.7 204.8h1.25M131.3 204.4h1.25M131.9 204.6h1.25M132.8 204.8h1.25M136.0 204.4h1.25M137.2 204.7h1.25M145.1 204.7h1.25M148.2 204.5h1.25M161.9 204.3h1.25M165.0 204.5h1.25M168.3 204.6h1.25M170.3 204.6h1.25M174.9 204.8h1.25M175.9 204.7h1.25M177.0 204.8h1.25M178.1 204.2h1.25M180.5 204.9h1.25M185.0 204.9h1.25M186.2 204.7h1.25M186.9 204.7h1.25M208.1 204.3h1.25M210.9 204.9h1.25M215.8 204.5h1.25M217.0 204.3h1.25M217.8 204.2h1.25M218.9 204.5h1.25M220.8 204.9h1.25M222.5 204.3h1.25M223.0 204.5h1.25M236.6 204.5h1.25M241.9 204.8h1.25M247.8 205.0h1.25M248.7 204.7h1.25M267.7 205.0h1.25M269.1 204.3h1.25M273.0 204.8h1.25M126.2 205.8h1.25M129.7 205.9h1.25M131.9 205.5h1.25M146.5 205.8h1.25M152.7 205.5h1.25M163.8 205.8h1.25M166.3 205.4h1.25M168.6 205.6h1.25M169.0 206.0h1.25M170.7 205.4h1.25M173.6 205.5h1.25M182.2 205.9h1.25M188.0 206.0h1.25M190.7 205.3h1.25M197.2 206.0h1.25M202.3 205.6h1.25M204.9 205.8h1.25M217.8 205.8h1.25M219.8 205.6h1.25M225.9 205.4h1.25M239.5 205.8h1.25M241.7 205.6h1.25M247.7 205.5h1.25M248.5 205.7h1.25M250.5 205.6h1.25M255.9 206.0h1.25M261.6 205.9h1.25M267.0 205.6h1.25M269.1 205.4h1.25M280.3 205.4h1.25M80.1 206.5h1.25M104.7 206.8h1.25M128.0 207.0h1.25M147.7 207.2h1.25M148.6 206.6h1.25M154.1 207.2h1.25M166.3 206.4h1.25M169.1 206.9h1.25M173.9 206.6h1.25M174.6 206.5h1.25M177.1 207.0h1.25M181.6 206.4h1.25M187.3 207.1h1.25M199.0 206.7h1.25M202.3 206.7h1.25M212.1 206.4h1.25M217.7 207.1h1.25M223.2 206.8h1.25M243.2 206.8h1.25M247.1 206.9h1.25M259.2 206.6h1.25M261.0 206.9h1.25M261.7 207.0h1.25M268.1 206.9h1.25M270.8 207.1h1.25M276.4 206.9h1.25M121.2 207.8h1.25M128.6 208.2h1.25M129.4 208.0h1.25M143.8 207.9h1.25M160.2 208.1h1.25M164.7 207.9h1.25M168.0 207.9h1.25M169.2 208.0h1.25M171.4 207.8h1.25M172.6 207.6h1.25M173.9 207.8h1.25M176.2 208.0h1.25M180.6 207.7h1.25M181.6 207.6h1.25M182.7 208.1h1.25M184.8 207.9h1.25M190.4 207.8h1.25M195.0 208.2h1.25M195.7 207.7h1.25M223.4 207.6h1.25M235.0 207.7h1.25M244.2 208.3h1.25M249.0 208.0h1.25M249.5 207.6h1.25M252.7 207.7h1.25M253.8 207.6h1.25M255.0 207.9h1.25M264.0 207.9h1.25M265.3 208.0h1.25M266.5 207.7h1.25M268.7 208.1h1.25M269.1 208.3h1.25M272.5 208.1h1.25M274.0 208.3h1.25M279.5 208.2h1.25M285.2 207.9h1.25M127.5 209.2h1.25M132.2 208.8h1.25M158.7 208.7h1.25M159.8 208.9h1.25M161.0 209.1h1.25M162.9 209.2h1.25M163.7 209.1h1.25M168.1 209.2h1.25M170.3 209.2h1.25M172.7 208.9h1.25M173.9 208.7h1.25M176.3 209.1h1.25M177.4 209.1h1.25M178.1 208.7h1.25M179.7 209.2h1.25M180.1 209.2h1.25M182.6 209.3h1.25M187.0 209.3h1.25M187.8 208.9h1.25M189.3 208.7h1.25M193.7 209.0h1.25M194.5 208.7h1.25M197.1 209.2h1.25M197.7 208.7h1.25M199.2 209.3h1.25M212.2 209.1h1.25M226.3 209.2h1.25M227.7 209.3h1.25M228.8 209.3h1.25M230.9 209.0h1.25M235.1 208.7h1.25M245.2 208.9h1.25M251.2 209.0h1.25M252.0 209.4h1.25M252.9 209.3h1.25M254.0 208.9h1.25M255.1 208.7h1.25M257.6 208.8h1.25M269.5 209.0h1.25M270.6 209.3h1.25M132.0 210.3h1.25M145.9 210.1h1.25M149.8 210.3h1.25M152.7 210.1h1.25M160.9 210.3h1.25M161.8 209.7h1.25M162.4 209.7h1.25M163.7 210.3h1.25M172.8 209.9h1.25M175.6 210.3h1.25M178.1 210.0h1.25M182.4 210.1h1.25M191.1 209.7h1.25M193.6 209.9h1.25M197.1 210.1h1.25M198.3 209.7h1.25M204.3 210.1h1.25M206.9 210.3h1.25M212.7 210.2h1.25M213.1 209.9h1.25M218.7 210.3h1.25M222.6 210.1h1.25M227.4 210.5h1.25M228.7 209.8h1.25M231.9 210.1h1.25M249.6 210.1h1.25M253.4 210.0h1.25M253.8 210.3h1.25M258.4 209.9h1.25M125.5 211.6h1.25M131.9 211.1h1.25M136.3 211.1h1.25M141.6 211.5h1.25M142.6 211.3h1.25M146.1 211.3h1.25M159.2 211.4h1.25M165.3 211.0h1.25M166.1 211.0h1.25M172.7 210.9h1.25M173.7 211.6h1.25M177.8 211.3h1.25M180.3 211.0h1.25M181.5 211.1h1.25M184.5 211.1h1.25M185.7 210.8h1.25M187.0 211.2h1.25M189.6 211.1h1.25M191.6 211.0h1.25M193.7 211.0h1.25M195.7 210.9h1.25M197.7 210.9h1.25M200.0 211.0h1.25M206.7 211.5h1.25M210.3 210.9h1.25M218.6 211.5h1.25M222.4 211.5h1.25M224.7 211.5h1.25M226.5 211.6h1.25M227.6 210.9h1.25M229.5 211.6h1.25M234.0 211.4h1.25M243.8 210.9h1.25M253.1 211.5h1.25M253.8 211.4h1.25M255.1 211.1h1.25M258.2 210.9h1.25M268.0 211.3h1.25M280.4 211.0h1.25M91.6 212.2h1.25M124.1 212.6h1.25M131.1 212.4h1.25M132.3 212.6h1.25M132.9 211.9h1.25M136.2 212.3h1.25M142.0 212.5h1.25M160.4 212.0h1.25M165.1 212.7h1.25M171.5 212.4h1.25M174.0 212.3h1.25M176.7 212.3h1.25M178.9 212.5h1.25M180.6 212.2h1.25M181.7 212.5h1.25M185.1 212.5h1.25M190.3 212.7h1.25M191.8 212.0h1.25M192.1 211.9h1.25M197.1 212.3h1.25M198.4 212.2h1.25M200.4 212.5h1.25M201.4 212.2h1.25M205.8 212.5h1.25M212.7 212.5h1.25M214.2 212.6h1.25M215.3 212.1h1.25M216.4 212.1h1.25M218.2 212.4h1.25M219.2 212.1h1.25M221.0 212.0h1.25M222.1 212.5h1.25M224.2 211.9h1.25M230.8 211.9h1.25M232.5 212.0h1.25M235.1 212.4h1.25M236.8 211.9h1.25M254.1 211.9h1.25M256.2 212.3h1.25M257.6 212.7h1.25M258.8 212.5h1.25M259.6 212.0h1.25M276.4 212.7h1.25M120.8 213.3h1.25M125.7 213.7h1.25M126.5 213.7h1.25M128.5 213.7h1.25M131.6 213.4h1.25M144.9 213.2h1.25M146.7 213.4h1.25M147.6 213.7h1.25M149.3 213.6h1.25M157.7 213.0h1.25M159.5 213.2h1.25M160.2 213.4h1.25M163.8 213.6h1.25M176.3 213.0h1.25M176.7 213.1h1.25M180.7 213.6h1.25M183.0 213.2h1.25M185.9 213.8h1.25M189.3 213.8h1.25M191.3 213.4h1.25M192.5 213.2h1.25M200.9 213.1h1.25M204.7 213.0h1.25M211.2 213.3h1.25M219.6 213.6h1.25M221.9 213.5h1.25M226.7 213.6h1.25M227.9 213.1h1.25M228.8 213.2h1.25M237.6 213.4h1.25M256.7 213.7h1.25M268.2 213.6h1.25M269.6 213.6h1.25M118.6 214.6h1.25M128.6 214.3h1.25M130.0 214.6h1.25M135.3 214.6h1.25M146.6 214.7h1.25M149.7 214.7h1.25M150.5 214.5h1.25M162.1 214.3h1.25M168.6 214.3h1.25M173.9 214.5h1.25M176.1 214.6h1.25M178.3 214.3h1.25M180.6 214.4h1.25M182.8 214.4h1.25M185.8 214.7h1.25M186.7 214.6h1.25M189.0 214.3h1.25M191.0 214.5h1.25M193.2 214.3h1.25M197.7 214.4h1.25M198.7 214.4h1.25M200.0 214.5h1.25M201.7 214.4h1.25M202.7 214.1h1.25M213.4 214.3h1.25M215.6 214.4h1.25M220.8 214.4h1.25M222.1 214.4h1.25M224.4 214.6h1.25M226.3 214.2h1.25M227.3 214.3h1.25M230.9 214.6h1.25M235.0 214.6h1.25M237.6 214.2h1.25M239.6 214.7h1.25M250.0 214.3h1.25M252.0 214.4h1.25M264.0 214.5h1.25M264.9 214.3h1.25M130.9 215.2h1.25M132.7 215.6h1.25M136.6 216.0h1.25M137.9 215.2h1.25M157.5 215.7h1.25M173.8 215.7h1.25M181.7 215.2h1.25M183.5 215.9h1.25M184.8 215.8h1.25M187.0 215.3h1.25M190.4 216.0h1.25M191.6 215.2h1.25M201.5 215.3h1.25M203.6 215.2h1.25M205.8 215.8h1.25M225.7 215.4h1.25M226.4 215.4h1.25M229.5 215.2h1.25M232.1 215.6h1.25M233.2 215.4h1.25M234.5 215.4h1.25M237.3 216.0h1.25M238.5 215.9h1.25M239.8 215.4h1.25M263.2 215.7h1.25M128.7 216.8h1.25M146.4 216.8h1.25M158.1 216.8h1.25M166.2 217.0h1.25M167.3 217.1h1.25M174.0 216.8h1.25M179.6 216.8h1.25M182.6 217.1h1.25M183.5 216.7h1.25M184.4 216.4h1.25M186.0 216.8h1.25M187.0 217.0h1.25M188.3 216.5h1.25M191.3 216.8h1.25M199.8 216.5h1.25M200.9 216.8h1.25M206.9 216.4h1.25M207.7 216.9h1.25M208.9 216.3h1.25M209.7 216.5h1.25M232.4 216.6h1.25M234.5 216.7h1.25M239.9 217.0h1.25M248.3 216.5h1.25M258.5 216.8h1.25M261.7 216.6h1.25M262.9 216.3h1.25M265.2 216.7h1.25M266.5 217.0h1.25M269.6 216.4h1.25M134.1 217.5h1.25M135.3 218.1h1.25M136.8 217.7h1.25M159.5 218.1h1.25M163.1 217.7h1.25M165.8 217.8h1.25M166.8 217.8h1.25M167.9 218.0h1.25M169.2 217.6h1.25M170.9 217.6h1.25M172.3 217.9h1.25M177.4 218.0h1.25M181.4 218.0h1.25M182.5 217.7h1.25M183.6 217.8h1.25M185.1 217.8h1.25M185.8 218.1h1.25M186.6 217.9h1.25M188.2 217.4h1.25M190.0 217.5h1.25M191.1 217.4h1.25M193.6 217.9h1.25M196.1 218.1h1.25M198.7 217.6h1.25M200.0 218.2h1.25M201.2 217.7h1.25M205.3 217.9h1.25M213.2 217.5h1.25M227.7 217.7h1.25M229.8 217.5h1.25M233.5 217.7h1.25M234.2 217.7h1.25M235.3 217.7h1.25M240.1 217.5h1.25M245.7 217.5h1.25M247.8 217.9h1.25M248.8 218.1h1.25M260.8 217.8h1.25M261.8 217.9h1.25M264.3 218.1h1.25M268.6 217.6h1.25M151.0 218.8h1.25M154.7 219.1h1.25M156.4 218.6h1.25M159.2 219.2h1.25M162.8 218.9h1.25M167.1 219.0h1.25M168.3 219.3h1.25M173.7 218.5h1.25M174.5 218.7h1.25M176.1 218.6h1.25M177.4 219.2h1.25M178.6 218.9h1.25M181.6 219.0h1.25M182.9 218.9h1.25M183.7 218.7h1.25M185.2 218.5h1.25M185.6 219.1h1.25M186.9 219.2h1.25M194.4 218.7h1.25M202.4 218.7h1.25M203.4 218.6h1.25M204.6 219.0h1.25M226.4 219.2h1.25M228.9 219.1h1.25M229.8 218.7h1.25M230.9 218.7h1.25M233.4 218.6h1.25M237.8 219.1h1.25M238.5 219.0h1.25M241.1 219.2h1.25M247.6 219.3h1.25M250.9 218.6h1.25M251.6 218.8h1.25M263.1 219.2h1.25M263.7 218.7h1.25M268.3 219.1h1.25M128.4 220.1h1.25M149.6 219.6h1.25M154.2 220.4h1.25M156.1 219.7h1.25M159.7 219.7h1.25M165.2 220.0h1.25M166.4 220.1h1.25M167.5 220.4h1.25M170.6 220.2h1.25M172.9 220.1h1.25M173.9 219.9h1.25M175.9 220.3h1.25M177.1 219.9h1.25M184.8 220.3h1.25M185.6 220.2h1.25M189.5 220.3h1.25M191.4 219.8h1.25M200.5 219.8h1.25M202.2 220.0h1.25M203.9 220.0h1.25M221.2 219.6h1.25M222.2 220.2h1.25M225.4 220.2h1.25M228.4 220.2h1.25M232.4 220.4h1.25M232.9 220.3h1.25M234.6 219.8h1.25M235.4 219.9h1.25M239.0 220.2h1.25M241.6 219.9h1.25M262.8 220.2h1.25M134.3 221.3h1.25M157.6 221.1h1.25M166.2 220.8h1.25M171.3 221.2h1.25M173.7 221.4h1.25M174.7 221.1h1.25M182.4 220.9h1.25M184.8 221.1h1.25M186.3 220.9h1.25M188.2 221.1h1.25M191.4 221.4h1.25M192.9 220.8h1.25M194.0 220.9h1.25M195.8 220.9h1.25M198.8 221.3h1.25M201.5 221.5h1.25M204.3 221.5h1.25M207.6 220.8h1.25M224.5 221.0h1.25M227.9 221.0h1.25M229.9 221.2h1.25M232.4 221.4h1.25M235.2 221.2h1.25M236.6 221.1h1.25M237.2 220.7h1.25M238.7 220.8h1.25M242.0 221.2h1.25M265.0 221.4h1.25M157.5 222.2h1.25M163.9 221.9h1.25M165.1 222.0h1.25M165.9 222.3h1.25M171.9 222.4h1.25M174.7 222.0h1.25M179.3 222.5h1.25M182.5 222.5h1.25M184.9 222.6h1.25M185.9 222.4h1.25M190.1 222.2h1.25M191.2 222.4h1.25M194.8 221.9h1.25M202.3 222.0h1.25M203.6 222.1h1.25M207.1 222.0h1.25M207.7 221.9h1.25M221.0 222.5h1.25M223.4 222.4h1.25M224.7 222.4h1.25M225.6 222.1h1.25M228.0 222.6h1.25M229.0 222.5h1.25M230.0 222.5h1.25M231.0 222.5h1.25M232.5 222.1h1.25M234.7 222.4h1.25M242.9 222.4h1.25M253.3 222.1h1.25M131.2 222.9h1.25M149.8 223.6h1.25M158.7 223.4h1.25M159.2 223.5h1.25M163.6 223.0h1.25M165.0 223.0h1.25M166.3 223.5h1.25M169.5 223.4h1.25M170.7 223.6h1.25M172.6 223.6h1.25M176.0 223.6h1.25M181.5 223.3h1.25M183.5 223.3h1.25M184.9 223.4h1.25M187.4 223.5h1.25M188.4 223.0h1.25M189.0 223.4h1.25M190.3 223.1h1.25M191.8 223.5h1.25M196.7 223.1h1.25M201.6 223.5h1.25M204.6 223.0h1.25M205.8 223.1h1.25M209.8 223.4h1.25M210.9 223.2h1.25M224.7 223.5h1.25M225.2 222.9h1.25M229.0 223.4h1.25M229.8 223.1h1.25M231.1 223.4h1.25M234.0 223.2h1.25M238.4 223.0h1.25M247.5 223.3h1.25M248.5 223.1h1.25M250.0 223.0h1.25M126.3 224.7h1.25M130.7 224.2h1.25M133.0 224.8h1.25M137.5 224.7h1.25M145.0 224.4h1.25M159.2 224.0h1.25M173.7 224.2h1.25M176.0 224.1h1.25M181.3 224.5h1.25M183.5 224.8h1.25M185.1 224.6h1.25M186.9 224.4h1.25M188.1 224.8h1.25M189.9 224.7h1.25M191.8 224.6h1.25M192.5 224.1h1.25M193.9 224.3h1.25M195.5 224.5h1.25M201.6 224.5h1.25M202.0 224.1h1.25M204.4 224.1h1.25M207.6 224.2h1.25M209.4 224.6h1.25M209.7 224.2h1.25M220.4 224.1h1.25M224.1 224.3h1.25M225.8 224.1h1.25M228.5 224.3h1.25M230.0 224.5h1.25M231.4 224.3h1.25M231.8 224.5h1.25M238.9 224.6h1.25M251.7 224.4h1.25M150.6 225.3h1.25M157.7 225.2h1.25M159.7 225.5h1.25M160.5 225.3h1.25M162.4 225.1h1.25M164.7 225.5h1.25M169.4 225.7h1.25M170.4 225.3h1.25M172.5 225.3h1.25M173.7 225.7h1.25M180.7 225.3h1.25M185.8 225.2h1.25M186.9 225.5h1.25M187.9 225.6h1.25M190.6 225.1h1.25M192.6 225.8h1.25M194.4 225.8h1.25M196.1 225.8h1.25M196.6 225.2h1.25M198.9 225.6h1.25M202.2 225.4h1.25M203.6 225.5h1.25M204.6 225.5h1.25M205.7 225.1h1.25M206.7 225.9h1.25M207.6 225.9h1.25M216.8 225.1h1.25M225.6 225.5h1.25M227.4 225.2h1.25M229.8 225.7h1.25M231.0 225.5h1.25M236.4 225.9h1.25M238.4 225.5h1.25M239.7 225.4h1.25M240.6 225.5h1.25M244.0 225.7h1.25M245.6 225.2h1.25M248.2 225.5h1.25M253.0 225.3h1.25M149.5 226.6h1.25M158.4 226.6h1.25M160.6 226.6h1.25M161.7 226.3h1.25M162.5 226.3h1.25M164.0 227.0h1.25M166.4 226.5h1.25M168.3 226.2h1.25M170.5 226.9h1.25M173.1 226.6h1.25M178.1 226.7h1.25M179.0 226.6h1.25M181.8 227.0h1.25M182.2 226.3h1.25M184.4 226.6h1.25M186.2 227.0h1.25M186.9 226.4h1.25M189.0 226.5h1.25M190.4 226.7h1.25M191.1 226.6h1.25M192.7 226.4h1.25M193.7 226.3h1.25M194.8 226.6h1.25M198.4 226.6h1.25M200.1 226.3h1.25M201.3 226.8h1.25M202.1 226.8h1.25M203.6 226.8h1.25M204.9 226.8h1.25M209.3 226.9h1.25M215.9 226.6h1.25M216.4 226.9h1.25M222.1 226.5h1.25M225.5 226.6h1.25M228.0 226.9h1.25M229.5 226.9h1.25M231.4 226.7h1.25M236.5 226.9h1.25M240.1 226.9h1.25M245.0 226.5h1.25M246.5 226.5h1.25M253.1 226.2h1.25M158.5 227.7h1.25M160.3 227.8h1.25M161.9 227.4h1.25M164.6 227.9h1.25M168.6 227.8h1.25M170.2 227.6h1.25M178.4 227.4h1.25M181.6 227.6h1.25M185.0 227.4h1.25M185.5 227.8h1.25M187.8 227.3h1.25M190.2 227.8h1.25M191.1 227.7h1.25M192.3 227.5h1.25M194.9 227.9h1.25M195.8 227.5h1.25M198.4 227.5h1.25M199.2 227.5h1.25M200.5 227.8h1.25M203.1 227.7h1.25M204.3 227.4h1.25M206.1 227.8h1.25M207.1 228.1h1.25M209.3 227.8h1.25M212.0 227.8h1.25M218.8 228.0h1.25M223.1 228.1h1.25M227.5 227.9h1.25M233.2 228.0h1.25M237.2 227.5h1.25M245.1 228.1h1.25M247.6 228.1h1.25M252.9 228.1h1.25M158.6 228.8h1.25M162.0 228.8h1.25M162.4 228.5h1.25M167.4 228.6h1.25M176.7 228.9h1.25M178.5 229.2h1.25M186.7 228.6h1.25M188.5 228.6h1.25M189.2 229.1h1.25M190.7 228.7h1.25M191.7 228.4h1.25M192.4 228.8h1.25M193.6 229.2h1.25M194.3 228.7h1.25M196.7 228.8h1.25M198.0 228.5h1.25M199.3 228.8h1.25M200.5 228.5h1.25M201.2 228.8h1.25M202.7 228.6h1.25M203.2 229.0h1.25M204.3 229.0h1.25M208.0 229.0h1.25M209.2 229.1h1.25M210.4 228.6h1.25M216.6 228.5h1.25M220.3 228.8h1.25M220.9 228.5h1.25M228.8 229.0h1.25M234.6 229.1h1.25M235.3 228.9h1.25M236.8 228.7h1.25M239.0 228.9h1.25M245.0 228.7h1.25M257.7 229.1h1.25M285.2 229.0h1.25M152.1 229.9h1.25M159.4 230.1h1.25M168.6 229.7h1.25M169.8 229.7h1.25M175.0 229.7h1.25M187.2 230.2h1.25M188.4 230.2h1.25M189.0 229.7h1.25M190.5 230.0h1.25M192.7 230.3h1.25M196.6 229.9h1.25M198.1 229.6h1.25M198.9 229.5h1.25M200.2 230.0h1.25M201.7 230.2h1.25M202.5 229.6h1.25M204.6 229.9h1.25M205.7 229.5h1.25M208.3 229.8h1.25M209.9 229.7h1.25M213.2 229.8h1.25M215.6 229.7h1.25M217.0 230.3h1.25M218.5 229.6h1.25M220.8 229.6h1.25M225.6 229.7h1.25M226.8 229.8h1.25M229.9 230.3h1.25M231.9 229.7h1.25M234.0 230.1h1.25M237.9 230.0h1.25M241.8 230.2h1.25M245.3 229.7h1.25M252.6 230.1h1.25M159.8 230.9h1.25M162.0 231.2h1.25M162.5 231.0h1.25M163.8 231.0h1.25M164.7 231.3h1.25M174.8 231.4h1.25M178.5 231.2h1.25M179.1 230.7h1.25M184.7 231.0h1.25M187.4 230.6h1.25M188.5 231.1h1.25M189.5 231.0h1.25M190.6 230.7h1.25M191.1 231.1h1.25M193.6 231.2h1.25M194.3 231.3h1.25M196.6 231.2h1.25M198.3 230.8h1.25M199.3 230.7h1.25M201.1 230.7h1.25M203.1 230.6h1.25M204.7 231.1h1.25M206.0 231.4h1.25M207.8 231.1h1.25M209.8 231.3h1.25M210.9 231.2h1.25M212.6 231.0h1.25M215.3 230.7h1.25M216.4 230.8h1.25M218.0 230.8h1.25M218.5 230.9h1.25M220.3 230.6h1.25M220.8 230.7h1.25M226.3 231.3h1.25M229.0 230.9h1.25M230.7 230.9h1.25M233.1 231.0h1.25M241.8 230.6h1.25M248.5 231.1h1.25M249.8 230.7h1.25M255.0 230.8h1.25M152.7 231.8h1.25M154.1 232.4h1.25M160.2 232.2h1.25M163.8 231.8h1.25M170.5 232.4h1.25M172.7 232.1h1.25M175.9 232.2h1.25M177.5 232.0h1.25M179.4 231.8h1.25M180.4 232.2h1.25M181.3 232.1h1.25M187.0 232.3h1.25M188.5 231.9h1.25M191.7 232.5h1.25M193.2 231.8h1.25M195.0 232.4h1.25M195.5 232.3h1.25M196.6 232.2h1.25M198.4 232.0h1.25M199.0 231.8h1.25M200.6 232.4h1.25M201.0 232.0h1.25M202.0 231.9h1.25M205.6 232.3h1.25M207.6 232.3h1.25M208.9 231.8h1.25M209.9 232.5h1.25M211.4 231.8h1.25M213.5 232.2h1.25M214.8 231.7h1.25M215.2 231.8h1.25M216.9 231.8h1.25M218.0 232.1h1.25M219.2 232.4h1.25M221.0 231.8h1.25M224.2 231.7h1.25M228.9 231.8h1.25M230.2 231.8h1.25M234.0 232.3h1.25M235.5 232.4h1.25M237.5 232.2h1.25M238.4 231.7h1.25M240.5 232.2h1.25M245.7 232.3h1.25M246.3 232.1h1.25M247.9 231.9h1.25M248.6 231.9h1.25M254.3 232.3h1.25M260.5 231.9h1.25M262.0 231.8h1.25M109.7 232.8h1.25M122.9 233.5h1.25M158.8 232.8h1.25M161.6 233.6h1.25M165.8 233.2h1.25M171.9 233.2h1.25M173.7 233.5h1.25M174.6 233.2h1.25M176.9 233.1h1.25M180.1 233.5h1.25M184.9 233.2h1.25M185.9 233.3h1.25M187.8 233.5h1.25M188.9 233.3h1.25M192.1 233.4h1.25M193.3 233.2h1.25M198.2 232.9h1.25M199.4 233.0h1.25M203.7 232.8h1.25M204.6 232.9h1.25M206.8 233.5h1.25M210.1 233.2h1.25M211.1 232.8h1.25M214.6 233.0h1.25M217.5 233.4h1.25M218.6 233.1h1.25M220.3 233.2h1.25M222.4 233.1h1.25M226.9 232.9h1.25M228.0 233.4h1.25M230.8 233.6h1.25M231.9 233.4h1.25M237.9 233.4h1.25M238.5 233.1h1.25M241.8 233.1h1.25M244.0 233.4h1.25M246.1 233.5h1.25M248.2 233.5h1.25M252.9 233.5h1.25M116.6 234.2h1.25M137.1 234.4h1.25M173.0 234.5h1.25M173.7 234.0h1.25M175.9 234.2h1.25M176.8 234.5h1.25M179.6 234.6h1.25M181.2 234.5h1.25M184.0 234.5h1.25M184.4 234.2h1.25M187.0 234.6h1.25M203.6 234.5h1.25M206.7 234.3h1.25M210.1 234.5h1.25M212.1 234.2h1.25M219.0 234.0h1.25M225.5 234.6h1.25M229.1 234.5h1.25M231.1 233.9h1.25M233.1 234.6h1.25M234.4 233.9h1.25M238.4 234.1h1.25M239.9 234.4h1.25M243.4 234.6h1.25M246.2 234.6h1.25M132.8 235.2h1.25M181.8 235.4h1.25M182.4 235.8h1.25M185.5 235.5h1.25M189.5 235.4h1.25M192.4 235.2h1.25M198.3 235.2h1.25M199.3 235.7h1.25M202.0 235.1h1.25M208.2 235.7h1.25M210.5 235.6h1.25M210.9 235.1h1.25M216.5 235.5h1.25M229.5 235.3h1.25M232.2 235.5h1.25M235.1 235.7h1.25M237.4 235.6h1.25M241.0 235.3h1.25M243.2 235.2h1.25M245.2 235.8h1.25M253.3 235.2h1.25M260.4 235.2h1.25M77.2 236.3h1.25M119.1 236.5h1.25M148.3 236.6h1.25M157.3 236.5h1.25M158.7 236.5h1.25M162.8 236.5h1.25M166.0 236.8h1.25M166.8 236.2h1.25M168.7 236.8h1.25M169.8 236.3h1.25M170.2 236.3h1.25M171.6 236.3h1.25M177.0 236.6h1.25M179.4 236.5h1.25M180.2 236.8h1.25M182.9 236.4h1.25M184.1 236.8h1.25M185.1 236.1h1.25M185.8 236.3h1.25M190.4 236.8h1.25M198.3 236.5h1.25M208.9 236.6h1.25M210.4 236.1h1.25M211.9 236.4h1.25M214.4 236.4h1.25M225.5 236.8h1.25M229.2 236.1h1.25M230.2 236.6h1.25M231.2 236.8h1.25M235.4 236.6h1.25M239.0 236.7h1.25M241.1 236.6h1.25M247.3 236.5h1.25M249.0 236.4h1.25M250.0 236.9h1.25M251.0 236.2h1.25M252.7 236.7h1.25M255.2 236.7h1.25M87.8 237.5h1.25M163.5 237.5h1.25M167.0 238.0h1.25M168.0 237.5h1.25M169.4 237.7h1.25M172.9 237.6h1.25M176.8 237.7h1.25M180.2 237.3h1.25M182.3 237.9h1.25M183.5 237.5h1.25M185.0 237.8h1.25M185.7 237.4h1.25M187.1 237.4h1.25M191.2 237.8h1.25M192.3 237.7h1.25M195.1 237.7h1.25M196.0 237.8h1.25M196.6 237.6h1.25M199.0 237.8h1.25M200.4 237.9h1.25M201.5 237.9h1.25M202.6 237.3h1.25M204.6 237.5h1.25M206.7 237.3h1.25M208.0 238.0h1.25M212.7 237.5h1.25M213.6 237.8h1.25M218.2 237.7h1.25M220.1 237.4h1.25M224.6 237.2h1.25M226.3 237.6h1.25M227.6 237.9h1.25M228.5 237.9h1.25M232.4 237.9h1.25M236.6 237.9h1.25M239.7 237.9h1.25M243.8 237.5h1.25M245.3 237.7h1.25M247.3 237.3h1.25M157.0 238.7h1.25M158.5 239.0h1.25M166.1 238.4h1.25M167.9 238.9h1.25M169.6 238.8h1.25M170.6 238.4h1.25M171.6 238.5h1.25M174.8 238.7h1.25M185.0 239.1h1.25M186.1 239.0h1.25M190.3 239.0h1.25M192.1 238.8h1.25M200.3 238.6h1.25M203.3 238.6h1.25M204.4 238.8h1.25M206.7 238.9h1.25M208.2 239.0h1.25M212.1 239.0h1.25M213.2 238.4h1.25M214.3 238.9h1.25M215.4 238.4h1.25M222.5 238.9h1.25M224.2 238.8h1.25M229.7 238.7h1.25M230.9 238.7h1.25M233.2 238.9h1.25M234.6 238.5h1.25M242.0 238.8h1.25M244.6 238.8h1.25M245.4 238.7h1.25M246.4 238.4h1.25M101.2 239.7h1.25M105.5 240.0h1.25M121.1 239.7h1.25M158.3 239.4h1.25M159.9 240.1h1.25M161.8 239.9h1.25M167.1 239.6h1.25M172.0 240.0h1.25M179.6 240.1h1.25M180.4 239.8h1.25M184.1 240.0h1.25M184.8 240.1h1.25M188.1 239.9h1.25M190.2 240.1h1.25M191.5 239.6h1.25M192.2 239.4h1.25M201.5 239.6h1.25M203.6 239.6h1.25M206.4 240.0h1.25M208.3 239.8h1.25M211.5 239.6h1.25M212.3 239.9h1.25M213.4 239.5h1.25M214.8 239.6h1.25M217.1 239.6h1.25M217.8 240.1h1.25M221.3 239.9h1.25M224.5 239.6h1.25M225.2 240.0h1.25M229.8 240.0h1.25M232.1 239.6h1.25M235.3 240.0h1.25M244.4 239.7h1.25M245.3 239.7h1.25M251.5 239.7h1.25M253.0 239.9h1.25M273.8 239.6h1.25M113.1 240.9h1.25M158.2 241.0h1.25M159.7 240.6h1.25M163.5 240.5h1.25M166.3 240.6h1.25M170.7 241.2h1.25M174.6 241.1h1.25M176.1 240.9h1.25M177.3 240.8h1.25M178.4 241.1h1.25M181.5 240.8h1.25M184.9 241.0h1.25M185.7 241.1h1.25M189.3 240.6h1.25M190.5 241.0h1.25M191.1 240.6h1.25M193.9 240.6h1.25M195.9 240.6h1.25M197.2 241.3h1.25M205.8 241.0h1.25M211.3 240.9h1.25M211.9 240.7h1.25M215.9 241.3h1.25M218.0 241.2h1.25M225.5 241.1h1.25M230.1 240.6h1.25M230.8 240.7h1.25M237.3 240.7h1.25M245.4 240.6h1.25M247.2 240.8h1.25M250.9 240.5h1.25M252.2 240.8h1.25M258.3 240.9h1.25M260.4 240.7h1.25M263.9 240.7h1.25M138.5 242.2h1.25M141.6 242.0h1.25M154.1 242.2h1.25M157.5 242.2h1.25M160.7 242.0h1.25M161.4 241.8h1.25M165.2 241.7h1.25M171.9 242.0h1.25M173.7 242.3h1.25M174.7 242.1h1.25M177.5 241.8h1.25M178.2 241.7h1.25M179.5 241.6h1.25M183.5 242.1h1.25M186.8 242.2h1.25M189.4 242.3h1.25M190.4 242.1h1.25M192.3 242.0h1.25M195.6 241.8h1.25M197.9 241.7h1.25M200.3 241.6h1.25M207.6 241.9h1.25M209.1 242.2h1.25M209.9 242.1h1.25M216.7 241.9h1.25M220.3 241.6h1.25M222.4 241.7h1.25M223.1 242.1h1.25M225.5 242.3h1.25M226.5 242.2h1.25M227.7 242.0h1.25M230.8 242.3h1.25M233.4 242.1h1.25M235.5 242.3h1.25M248.4 242.0h1.25M268.1 242.4h1.25M102.3 243.0h1.25M113.4 243.3h1.25M114.6 243.1h1.25M157.6 242.8h1.25M159.7 242.8h1.25M161.3 242.8h1.25M162.5 242.7h1.25M165.4 243.1h1.25M177.8 242.8h1.25M185.5 243.1h1.25M189.3 243.3h1.25M192.9 243.1h1.25M197.7 243.3h1.25M201.3 243.4h1.25M204.5 242.7h1.25M207.9 242.8h1.25M209.7 242.7h1.25M211.6 243.0h1.25M215.4 243.3h1.25M216.5 243.4h1.25M223.0 243.1h1.25M224.0 243.3h1.25M227.0 243.4h1.25M227.4 243.0h1.25M233.5 243.3h1.25M234.6 242.8h1.25M236.4 243.1h1.25M237.5 242.7h1.25M242.8 243.1h1.25M245.3 242.9h1.25M250.0 242.7h1.25M77.7 243.9h1.25M115.4 244.2h1.25M119.1 244.5h1.25M137.2 244.4h1.25M138.5 244.4h1.25M140.4 244.4h1.25M156.5 244.1h1.25M158.6 244.6h1.25M161.4 244.2h1.25M164.1 244.5h1.25M165.2 244.1h1.25M171.4 244.6h1.25M176.4 244.4h1.25M177.1 244.0h1.25M178.0 244.4h1.25M179.6 244.2h1.25M180.4 244.0h1.25M182.8 244.0h1.25M184.5 243.8h1.25M186.0 243.9h1.25M191.7 244.5h1.25M200.0 244.5h1.25M208.1 244.4h1.25M211.1 243.9h1.25M212.5 243.9h1.25M213.6 243.8h1.25M224.8 244.4h1.25M229.9 244.5h1.25M236.7 243.8h1.25M238.7 244.2h1.25M242.3 244.2h1.25M248.8 244.3h1.25M271.5 244.5h1.25M111.0 245.4h1.25M126.3 245.1h1.25M159.2 245.1h1.25M161.0 245.4h1.25M163.0 245.4h1.25M164.7 245.0h1.25M170.7 245.4h1.25M176.9 245.2h1.25M179.3 245.7h1.25M180.3 245.7h1.25M182.9 245.3h1.25M191.4 245.0h1.25M196.6 245.4h1.25M199.2 245.2h1.25M200.3 245.2h1.25M201.0 245.1h1.25M203.9 245.3h1.25M209.2 245.1h1.25M214.4 245.0h1.25M216.7 245.3h1.25M217.9 245.3h1.25M223.3 245.3h1.25M224.4 245.6h1.25M225.8 245.4h1.25M227.9 245.5h1.25M229.6 245.7h1.25M231.1 245.4h1.25M232.2 245.3h1.25M158.3 246.7h1.25M161.9 246.5h1.25M162.6 246.5h1.25M165.9 246.4h1.25M167.3 246.1h1.25M170.8 246.4h1.25M174.8 246.8h1.25M177.5 246.5h1.25M180.1 246.5h1.25M181.7 246.1h1.25M182.3 246.1h1.25M183.8 246.3h1.25M185.0 246.2h1.25M191.5 246.0h1.25M194.9 246.7h1.25M198.3 246.3h1.25M202.7 246.7h1.25M206.8 246.6h1.25M208.1 246.6h1.25M210.2 246.7h1.25M211.5 246.2h1.25M213.5 246.2h1.25M214.2 246.4h1.25M216.7 246.2h1.25M218.1 246.7h1.25M221.3 246.3h1.25M228.0 246.2h1.25M231.9 246.6h1.25M251.5 246.7h1.25M278.6 246.4h1.25M108.6 247.7h1.25M110.1 247.5h1.25M158.5 247.3h1.25M160.6 247.1h1.25M161.9 247.7h1.25M164.6 247.5h1.25M166.5 247.6h1.25M168.0 247.4h1.25M169.2 247.1h1.25M170.4 247.3h1.25M175.1 247.9h1.25M176.1 247.2h1.25M178.4 247.8h1.25M179.0 247.1h1.25M185.1 247.1h1.25M191.7 247.4h1.25M196.7 247.5h1.25M198.7 247.3h1.25M203.4 247.3h1.25M207.7 247.3h1.25M217.1 247.3h1.25M218.9 247.8h1.25M221.0 247.8h1.25M229.0 247.4h1.25M246.1 247.5h1.25M248.5 247.7h1.25M256.0 247.3h1.25M264.8 247.2h1.25M270.4 247.2h1.25M282.3 247.5h1.25M287.3 247.3h1.25M104.8 248.2h1.25M142.1 248.9h1.25M159.3 248.4h1.25M160.6 248.7h1.25M162.5 248.4h1.25M166.8 248.6h1.25M168.2 248.6h1.25M172.6 248.2h1.25M174.0 248.9h1.25M174.9 248.7h1.25M178.1 248.9h1.25M180.3 248.5h1.25M182.3 248.5h1.25M183.8 248.3h1.25M186.3 248.9h1.25M190.2 248.6h1.25M205.9 248.7h1.25M213.4 248.3h1.25M216.9 248.8h1.25M218.6 248.7h1.25M220.2 248.2h1.25M221.1 248.4h1.25M229.0 248.8h1.25M246.5 248.7h1.25M250.7 248.5h1.25M258.6 248.7h1.25M164.7 249.8h1.25M166.5 249.5h1.25M170.1 249.6h1.25M172.0 249.4h1.25M173.0 250.0h1.25M173.7 249.9h1.25M175.9 250.1h1.25M177.0 249.6h1.25M181.4 249.8h1.25M186.1 250.1h1.25M205.6 249.6h1.25M222.3 249.6h1.25M223.2 249.4h1.25M240.8 250.0h1.25M120.1 250.8h1.25M130.8 251.0h1.25M164.1 250.8h1.25M169.5 250.5h1.25M170.8 250.9h1.25M174.7 251.0h1.25M183.8 250.9h1.25M192.3 250.7h1.25M193.4 250.7h1.25M206.9 250.9h1.25M291.6 251.1h1.25M134.4 252.2h1.25M162.6 252.1h1.25M166.4 252.1h1.25M167.4 251.6h1.25M171.9 251.9h1.25M173.4 251.6h1.25M177.1 252.1h1.25M179.7 251.5h1.25M183.4 252.0h1.25M184.5 252.1h1.25M208.2 252.0h1.25M244.2 252.0h1.25M167.5 253.1h1.25M168.1 253.1h1.25M169.5 253.2h1.25M170.1 252.6h1.25M180.6 252.7h1.25M198.2 253.1h1.25M167.6 254.2h1.25M182.5 254.4h1.25M203.6 254.3h1.25M283.4 254.2h1.25M143.0 254.8h1.25M170.4 255.0h1.25M172.6 255.0h1.25M283.0 254.9h1.25M289.2 254.9h1.25M144.3 256.0h1.25M170.6 256.0h1.25M171.8 256.0h1.25M267.7 256.1h1.25M276.1 256.3h1.25M279.8 256.5h1.25M119.1 257.5h1.25M137.1 257.4h1.25M149.8 257.2h1.25M179.1 257.8h1.25M184.8 257.1h1.25M191.7 257.6h1.25M203.4 257.4h1.25M210.2 257.4h1.25M253.7 257.4h1.25M260.8 257.6h1.25M261.8 257.5h1.25M276.8 257.3h1.25M283.0 257.0h1.25M145.2 258.5h1.25M146.2 258.3h1.25M170.5 258.1h1.25M181.6 258.8h1.25M193.8 258.7h1.25M199.2 258.7h1.25M257.7 258.1h1.25M280.5 258.3h1.25M302.2 258.8h1.25M163.0 259.8h1.25M175.8 259.9h1.25M181.5 259.9h1.25M190.6 260.0h1.25M212.4 259.2h1.25M256.1 259.7h1.25M286.7 259.9h1.25M324.7 259.3h1.25M325.9 259.2h1.25M167.0 261.0h1.25M172.4 260.4h1.25M191.5 260.7h1.25M259.4 260.8h1.25M262.8 261.1h1.25M279.6 260.8h1.25M281.6 260.8h1.25M291.6 260.4h1.25M293.7 260.4h1.25M170.6 262.2h1.25M174.8 261.9h1.25M176.9 262.1h1.25M180.8 261.5h1.25M188.9 262.2h1.25M192.4 262.2h1.25M224.2 261.8h1.25M255.5 262.2h1.25M280.6 261.7h1.25M325.4 261.7h1.25M147.2 262.6h1.25M166.3 263.2h1.25M167.0 262.8h1.25M168.6 262.9h1.25M179.1 262.9h1.25M282.5 262.6h1.25M175.2 264.4h1.25M181.6 263.8h1.25M287.3 263.8h1.25M158.1 265.2h1.25M172.5 264.9h1.25M179.3 265.5h1.25M181.2 264.8h1.25M186.8 264.8h1.25M193.5 265.2h1.25M105.7 266.2h1.25M199.5 266.1h1.25M206.6 265.9h1.25M170.8 267.4h1.25M180.7 267.2h1.25M104.8 268.4h1.25M111.2 268.4h1.25M304.9 268.0h1.25M134.1 270.7h1.25M140.0 270.6h1.25M171.9 270.7h1.25M129.1 271.5h1.25M114.1 272.9h1.25M129.9 272.7h1.25M132.4 272.6h1.25M129.5 273.8h1.25M131.1 275.1h1.25M135.4 274.7h1.25M128.5 276.0h1.25M134.2 276.3h1.25M142.3 276.4h1.25M155.2 278.6h1.25M130.6 279.2h1.25M130.8 280.6h1.25M135.3 280.9h1.25M133.4 281.4h1.25M135.1 282.6h1.25M134.0 284.1h1.25M130.0 285.8h1.25M131.8 285.8h1.25M127.5 287.4h1.25M130.0 287.1h1.25M133.2 287.0h1.25M129.4 288.0h1.25M130.8 288.4h1.25M134.0 290.6h1.25M129.9 292.3h1.25M130.2 293.4h1.25M125.7 294.7h1.25M123.3 298.0h1.25M124.3 299.6h1.25M122.0 300.5h1.25M120.2 301.7h1.25M121.3 302.4h1.25M116.9 303.4h1.25M119.9 303.4h1.25M122.4 303.5h1.25M118.4 304.6h1.25M113.1 309.5h1.25M114.3 309.5h1.25M112.3 311.5h1.25M111.5 312.4h1.25M106.4 314.3h1.25M125.8 319.3h1.25M117.5 320.2h1.25M108.9 334.6h1.25M116.7 334.1h1.25M114.3 335.7h1.25M111.8 336.6h1.25M115.6 337.3h1.25M115.5 339.8h1.25M109.9 340.8h1.25M113.3 342.5h1.25M100.7 120.0h1.25M103.0 125.0h1.25M102.0 129.0h1.25M115.5 121.0h1.25M128.0 121.5h1.25M228.0 71.7h1.25M270.0 102.0h1.25M284.0 106.7h1.25M284.0 140.0h1.25M279.0 142.5h1.25M74.7 178.6h1.25"/><path stroke="#ff7f0e" stroke-width="1.25" d="M238.0 77.3h1.25M181.7 99.4h1.25M172.7 111.2h1.25M124.6 128.5h1.25M126.6 131.2h1.25M158.7 133.2h1.25M191.5 133.1h1.25M232.0 134.1h1.25M269.5 135.0h1.25M258.8 139.0h1.25M272.5 138.3h1.25M261.7 139.4h1.25M261.5 140.9h1.25M269.3 140.4h1.25M257.3 141.7h1.25M268.1 144.0h1.25M258.2 145.1h1.25M190.2 150.6h1.25M196.2 155.4h1.25M291.9 155.0h1.25M194.9 156.2h1.25M195.7 156.6h1.25M288.4 156.3h1.25M191.8 158.0h1.25M199.0 158.3h1.25M185.9 159.2h1.25M198.0 160.6h1.25M224.3 161.7h1.25M140.6 164.9h1.25M202.3 164.6h1.25M297.2 166.2h1.25M206.8 167.3h1.25M172.8 168.1h1.25M182.2 168.3h1.25M219.3 168.1h1.25M214.7 169.4h1.25M213.2 170.3h1.25M238.9 170.3h1.25M211.5 171.4h1.25M213.0 171.3h1.25M205.5 172.4h1.25M236.3 172.4h1.25M198.9 174.0h1.25M228.8 175.1h1.25M137.8 176.3h1.25M180.6 176.1h1.25M169.6 177.4h1.25M184.0 176.8h1.25M193.2 177.4h1.25M215.7 178.6h1.25M270.8 178.3h1.25M177.8 179.1h1.25M186.0 179.2h1.25M305.0 179.2h1.25M177.4 180.4h1.25M239.1 180.6h1.25M215.9 181.1h1.25M218.1 181.3h1.25M156.4 182.4h1.25M213.2 183.0h1.25M218.0 182.7h1.25M246.7 182.8h1.25M259.9 182.4h1.25M169.2 183.6h1.25M214.4 184.9h1.25M263.8 184.8h1.25M174.6 185.9h1.25M185.0 186.2h1.25M271.4 185.6h1.25M232.0 186.8h1.25M272.4 187.0h1.25M205.8 189.4h1.25M210.0 189.1h1.25M260.3 189.1h1.25M167.3 190.6h1.25M218.6 190.2h1.25M260.9 190.6h1.25M262.1 190.2h1.25M168.2 191.6h1.25M177.9 191.4h1.25M223.3 191.6h1.25M241.0 191.7h1.25M113.1 193.6h1.25M193.6 193.4h1.25M198.9 193.5h1.25M223.3 193.3h1.25M193.3 194.5h1.25M201.2 194.9h1.25M221.2 194.7h1.25M223.7 196.0h1.25M195.5 196.5h1.25M273.1 197.1h1.25M230.2 198.3h1.25M251.5 198.4h1.25M255.5 198.4h1.25M160.8 199.4h1.25M272.4 198.9h1.25M175.8 200.4h1.25M213.4 200.3h1.25M262.8 200.3h1.25M221.4 201.4h1.25M264.8 201.3h1.25M144.4 203.9h1.25M214.2 204.9h1.25M259.7 204.8h1.25M74.7 205.9h1.25M181.9 205.8h1.25M254.0 205.8h1.25M258.3 205.8h1.25M271.6 206.1h1.25M136.1 207.0h1.25M159.2 206.7h1.25M150.9 208.0h1.25M247.6 208.1h1.25M246.0 208.7h1.25M265.1 209.1h1.25M164.8 210.5h1.25M184.9 210.0h1.25M194.9 211.0h1.25M209.9 212.5h1.25M161.5 213.2h1.25M229.5 214.4h1.25M269.6 214.2h1.25M169.7 216.9h1.25M260.9 216.9h1.25M145.9 217.4h1.25M226.7 222.0h1.25M185.6 222.9h1.25M158.2 224.5h1.25M161.7 224.2h1.25M232.1 225.3h1.25M239.4 228.9h1.25M183.6 229.8h1.25M203.7 230.1h1.25M131.9 231.2h1.25M199.9 231.0h1.25M190.0 232.2h1.25M225.4 231.9h1.25M130.8 233.2h1.25M216.3 233.3h1.25M253.8 233.5h1.25M175.2 233.9h1.25M248.8 234.5h1.25M163.2 235.7h1.25M211.3 237.3h1.25M199.1 239.7h1.25M188.1 241.2h1.25M218.7 240.7h1.25M181.6 241.8h1.25M237.9 242.2h1.25M166.9 242.8h1.25M185.1 242.9h1.25M205.8 242.9h1.25M144.4 244.0h1.25M115.8 245.4h1.25M184.7 249.7h1.25M191.3 249.3h1.25M266.2 252.7h1.25M222.5 262.1h1.25M129.5 265.8h1.25M105.6 270.7h1.25M129.4 289.0h1.25M110.7 309.8h1.25M110.3 310.9h1.25M95.7 124.5h1.25M65.0 183.0h1.25"/></svg>
<div class="a" style="left:586px;top:447px;width:438px;height:36px;background:#fff"></div>
<div class="a" style="left:585.8px;top:447.5px;font-size:6.6px;color:#333;line-height:8px"><b>Legenda (Uso Imóvel)</b> - Clique na legenda de cores para visualizar o tipo de uso do imóvel no mapa</div>
<div class="a" style="left:587px;top:458px;width:8px;height:7px;background:#2ca02c"></div>
<div class="a" style="left:597px;top:457.5px;font-size:6.3px;color:#444;line-height:8px;transform:scaleX(0.93);transform-origin:0 0">Residencial</div>
<div class="a" style="left:684px;top:458px;width:8px;height:7px;background:#ff7f0e"></div>
<div class="a" style="left:694px;top:457.5px;font-size:6.3px;color:#444;line-height:8px;transform:scaleX(0.93);transform-origin:0 0">Atividade Econômica</div>
<div class="a" style="left:781px;top:458px;width:8px;height:7px;background:#1f77b4"></div>
<div class="a" style="left:791px;top:457.5px;font-size:6.3px;color:#444;line-height:8px;transform:scaleX(0.93);transform-origin:0 0">Misto</div>
</body></html>
